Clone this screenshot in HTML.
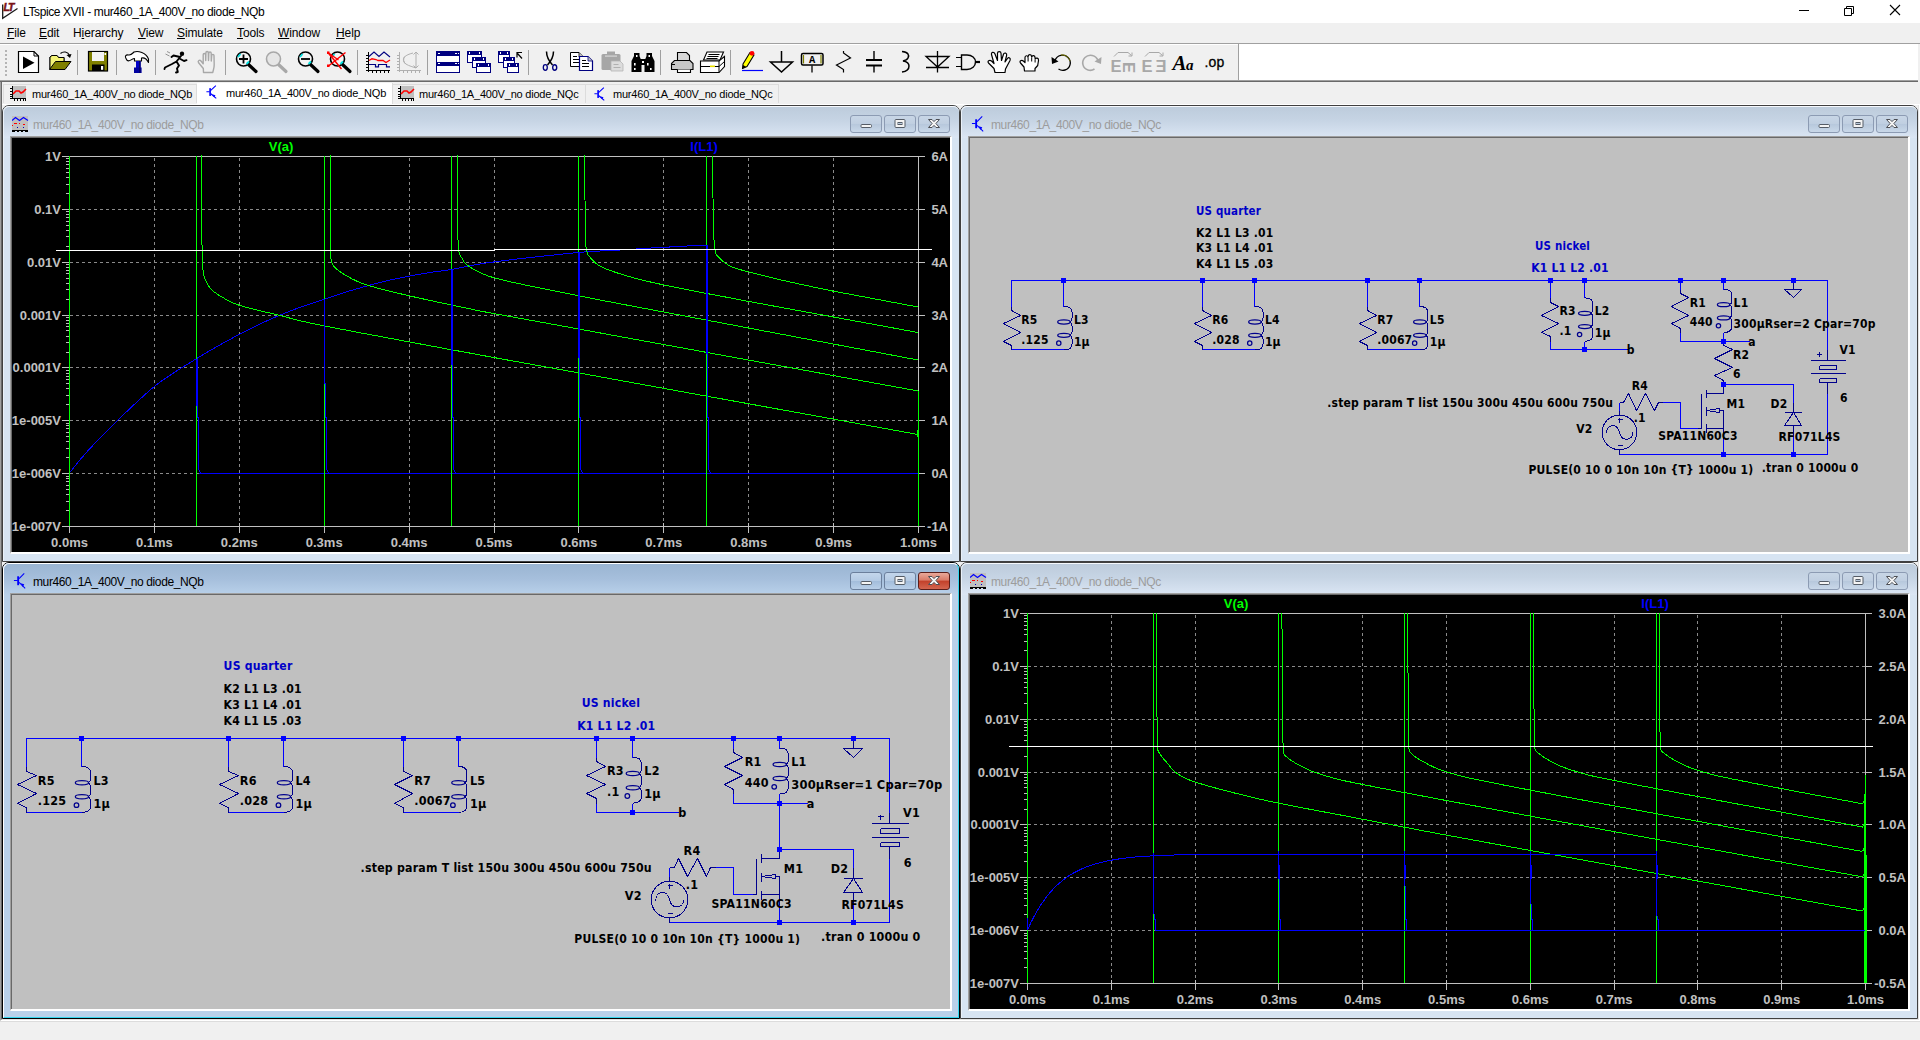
<!DOCTYPE html>
<html lang="en"><head><meta charset="utf-8"><title>LTspice XVII - mur460_1A_400V_no diode_NQb</title>
<style>
html,body{margin:0;padding:0;width:1920px;height:1040px;overflow:hidden;background:#f0f0f0;font-family:"Liberation Sans",sans-serif;}
*{box-sizing:border-box;}
.abs{position:absolute;}
#titlebar{position:absolute;left:0;top:0;width:1920px;height:23px;background:#fff;}
#titlebar .t{position:absolute;left:23px;top:4px;font-size:12px;line-height:16px;letter-spacing:-0.38px;color:#000;white-space:nowrap;}
#menubar{position:absolute;left:0;top:23px;width:1920px;height:20px;background:#f0f0f0;}
#menubar span{position:absolute;top:1.5px;font-size:12px;line-height:16px;letter-spacing:-0.1px;color:#000;white-space:nowrap;}
#menubar u{text-decoration:underline;text-underline-offset:1px;}
#toolbar{position:absolute;left:0;top:43px;width:1920px;height:39px;background:#f0f0f0;border-top:1px solid #a0a0a0;}
#toolbar .hl{position:absolute;left:0;top:0;width:1238px;height:1px;background:#fff;}
#toolbar .white{position:absolute;left:1238px;top:0;width:680px;height:36px;background:#fff;border-left:1px solid #a0a0a0;}
#toolbar .b1{position:absolute;left:0;top:36px;width:1918px;height:1px;background:#a0a0a0;}
#toolbar .b2{position:absolute;left:0;top:37px;width:1918px;height:1px;background:#696969;}
.sep{position:absolute;top:7px;width:1px;height:24px;background:#a0a0a0;}
#tabbar{position:absolute;left:0;top:82px;width:1920px;height:22px;background:#f0f0f0;}
.tab{position:absolute;top:2px;height:20px;font-size:11px;line-height:14px;letter-spacing:-0.21px;color:#000;white-space:nowrap;border-right:1px solid #dcdcdc;}
.tab.act{background:#fff;top:1px;height:21px;}
.tab span{position:absolute;top:4px;}
.tab svg{position:absolute;}
#mdi{position:absolute;left:0;top:104px;width:1920px;height:915px;background:#f0f0f0;}
#status{position:absolute;left:0;top:1019px;width:1920px;height:21px;background:#f0f0f0;border-top:2px solid #fff;}
.win{position:absolute;}
.win .cap{position:absolute;left:1px;top:1px;right:1px;height:32px;}
.win .ttl{position:absolute;top:10px;font-size:12px;line-height:16px;letter-spacing:-0.38px;white-space:nowrap;}
.cbtn{position:absolute;top:9px;width:32px;height:18px;border:1px solid #8391a8;border-radius:3px;}
</style></head>
<body>
<div id="titlebar">
<svg class="abs" style="left:2px;top:2px" width="20" height="18" viewBox="0 0 20 18"><path d="M0.7 2.5 L0.7 16.2 L15.5 6.5" fill="none" stroke="#1a1a1a" stroke-width="1.3"/><text x="1.5" y="9.3" style="font-family:'Liberation Sans',sans-serif;font-weight:bold;font-style:italic;font-size:10.5px;letter-spacing:-1.2px" fill="#7a1216" stroke="#7a1216" stroke-width="0.5">LT</text></svg>
<div class="t">LTspice XVII - mur460_1A_400V_no diode_NQb</div>
<svg class="abs" style="left:1780px;top:0" width="140" height="23" viewBox="0 0 140 23"><path d="M19 10.5 H29" stroke="#000" stroke-width="1" fill="none"/><path d="M64.5 8.5 h7 v7 h-7 Z M66.5 8.5 v-2 h7 v7 h-2" stroke="#000" stroke-width="1" fill="none"/><path d="M110 5 L120 15 M120 5 L110 15" stroke="#000" stroke-width="1.1" fill="none"/></svg>
</div>
<div id="menubar">
<span style="left:7px"><u>F</u>ile</span>
<span style="left:39px"><u>E</u>dit</span>
<span style="left:73px">H<u>i</u>erarchy</span>
<span style="left:138px"><u>V</u>iew</span>
<span style="left:177px"><u>S</u>imulate</span>
<span style="left:237px"><u>T</u>ools</span>
<span style="left:278px"><u>W</u>indow</span>
<span style="left:336px"><u>H</u>elp</span>
</div>
<div id="toolbar"><div class="hl"></div><div class="white"></div><div class="b1"></div><div class="b2"></div><svg class="abs" style="left:0;top:1px" width="1238" height="36" viewBox="0 45 1238 36"><rect x="5" y="50" width="2" height="2" fill="#b4b4b4"/>
<rect x="5" y="54" width="2" height="2" fill="#b4b4b4"/>
<rect x="5" y="58" width="2" height="2" fill="#b4b4b4"/>
<rect x="5" y="62" width="2" height="2" fill="#b4b4b4"/>
<rect x="5" y="66" width="2" height="2" fill="#b4b4b4"/>
<rect x="5" y="70" width="2" height="2" fill="#b4b4b4"/>
<rect x="5" y="74" width="2" height="2" fill="#b4b4b4"/>
<rect x="77" y="50" width="1" height="25" fill="#a0a0a0"/>
<rect x="116" y="50" width="1" height="25" fill="#a0a0a0"/>
<rect x="155" y="50" width="1" height="25" fill="#a0a0a0"/>
<rect x="225" y="50" width="1" height="25" fill="#a0a0a0"/>
<rect x="357" y="50" width="1" height="25" fill="#a0a0a0"/>
<rect x="427" y="50" width="1" height="25" fill="#a0a0a0"/>
<rect x="528" y="50" width="1" height="25" fill="#a0a0a0"/>
<rect x="660" y="50" width="1" height="25" fill="#a0a0a0"/>
<rect x="730" y="50" width="1" height="25" fill="#a0a0a0"/>
<path d="M18.5 51.5 H34 L38.5 56 V72.5 H18.5 Z" fill="#fff" stroke="#000" stroke-width="1.2"/><path d="M34 51.5 V56 H38.5" fill="none" stroke="#000" stroke-width="1"/><path d="M23 56.5 L23 69 L34.5 62.7 Z" fill="#000"/>
<path d="M50 69 V57 L52 55.5 H57 L58.5 57.5 H64 V61.5" fill="#f8f880" stroke="#000" stroke-width="1"/><path d="M50 69 V57 L52 55.5 H57 L58.5 57.5 H64 V61.5 H55.5 Z" fill="#f4f478"/><path d="M49.5 69.5 L55.5 61.5 H71 L65 69.5 Z" fill="#808000" stroke="#000" stroke-width="1"/><path d="M50 69 V57 L52 55.5 H57 L58.5 57.5 H64 V61.5" fill="none" stroke="#000" stroke-width="1"/><path d="M60.5 53.5 C63 51 68 51.5 69.5 55.5" fill="none" stroke="#000" stroke-width="1.1"/><path d="M66.5 55 L71.5 54 L70 58 Z" fill="#000"/>
<rect x="88.5" y="51.5" width="19" height="19.5" fill="#808000" stroke="#000" stroke-width="1.2"/><rect x="92" y="52" width="12" height="9" fill="#f4f4f4"/><rect x="104.5" y="53" width="1.6" height="2" fill="#fff"/><rect x="92" y="64.5" width="12.5" height="6.5" fill="#000"/><rect x="101" y="66" width="2.2" height="3.8" fill="#fff"/>
<path d="M126 58.5 C124.5 56 126 54.5 128.5 55 C131 55.5 132 54 134 52 C138 50.5 146 52.5 148.5 59 L148.5 62.5 C146.5 58.5 143.5 57.5 141.5 58 L141.5 61 L134.5 61 L134.5 58.5 C132.5 58.5 131 60.5 129 60.8 C127.5 61 126.5 60 126 58.5 Z" fill="#fff" stroke="#000" stroke-width="1.1" stroke-linejoin="round"/><rect x="136" y="61" width="4.6" height="7" fill="#0000c8"/><rect x="134" y="67.5" width="7.6" height="5.5" fill="#0000a0"/><rect x="139" y="61" width="1.6" height="12" fill="#000070"/>
<circle cx="182" cy="53.8" r="2.2" fill="#000"/><path d="M181 56 L176.5 61.5 L172 64 L165 67.5 L164.5 69 M176.5 61.5 L179 65.5 L177 68.5 L177.8 72 L176 72.5 M180 57 L173.5 55.5 L171.5 57 M179.5 58.5 L184 61 L186.5 60.2" fill="none" stroke="#000" stroke-width="1.9" stroke-linejoin="round" stroke-linecap="round"/><path d="M165.5 54 L169.5 56 M167 51.5 L170 53" stroke="#888" stroke-width="0.9" fill="none"/>
<path d="M203.5 72.5 L203.3 68.5 L198.6 62.8 C197.4 60.8 199.6 59.4 201 61 L203.2 63.8 L203.2 54.8 C203.2 53 205.6 53 205.6 54.8 L205.7 60.5 L205.9 52.8 C205.9 51 208.3 51 208.3 52.8 L208.5 60.5 L208.8 53.2 C208.8 51.5 211.2 51.5 211.2 53.2 L211.3 61 L211.7 55.5 C211.7 54 214 54 214 55.5 L214.2 64.5 C214.3 68 213.3 69.5 212.8 72.5 Z" fill="#f0f0f0" stroke="#a8a8a8" stroke-width="1.4" stroke-linejoin="round"/>
<line x1="248.5" y1="64.5" x2="256.0" y2="71.5" stroke="#000" stroke-width="3.2" stroke-linecap="round"/><circle cx="243.5" cy="59" r="7" fill="#f4f4f4" stroke="#000" stroke-width="1.6"/><path d="M238.0 57 L240.5 54" stroke="#00e0e0" stroke-width="1.8" fill="none"/><path d="M246.5 64 L249.0 61.5" stroke="#00e0e0" stroke-width="1.8" fill="none"/><path d="M239.0 59 H248.0 M243.5 54.5 V63.5" stroke="#000" stroke-width="1.8" fill="none"/>
<line x1="278.5" y1="64.5" x2="286.0" y2="71.5" stroke="#a8a8a8" stroke-width="3.2" stroke-linecap="round"/><circle cx="273.5" cy="59" r="7" fill="#e6e6e6" stroke="#a8a8a8" stroke-width="1.6"/>
<line x1="310.5" y1="64.5" x2="318.0" y2="71.5" stroke="#000" stroke-width="3.2" stroke-linecap="round"/><circle cx="305.5" cy="59" r="7" fill="#f4f4f4" stroke="#000" stroke-width="1.6"/><path d="M300.0 57 L302.5 54" stroke="#00e0e0" stroke-width="1.8" fill="none"/><path d="M308.5 64 L311.0 61.5" stroke="#00e0e0" stroke-width="1.8" fill="none"/><path d="M301.0 59 H310.0" stroke="#000" stroke-width="1.8" fill="none"/>
<line x1="342.5" y1="64.5" x2="350.0" y2="71.5" stroke="#000" stroke-width="3.2" stroke-linecap="round"/><circle cx="337.5" cy="59" r="7" fill="#f4f4f4" stroke="#000" stroke-width="1.6"/><path d="M332.0 57 L334.5 54" stroke="#00e0e0" stroke-width="1.8" fill="none"/><path d="M340.5 64 L343.0 61.5" stroke="#00e0e0" stroke-width="1.8" fill="none"/><path d="M327.5 52 L341.5 69 M345.5 52.5 L328.5 66 M328.5 53 L338.5 60" stroke="#ff0000" stroke-width="1.5" fill="none"/><rect x="327.0" y="51.5" width="2.5" height="2.5" fill="#ff0000"/><rect x="327.0" y="64.5" width="2.5" height="2.5" fill="#ff0000"/>
<g shape-rendering="crispEdges"><path d="M368.5 52 V72 M366 70.5 H390 M366 55.5h2 M366 58.5h2 M366 61.5h2 M366 64.5h2 M366 67.5h2 M372.5 71v2 M376.5 71v2 M380.5 71v2 M384.5 71v2 M388.5 71v2" stroke="#000" stroke-width="1" fill="none"/></g><polyline points="369,56.5 374,52 379,56.5 384,52 390,57" fill="none" stroke="#000080" stroke-width="1.1"/><polyline points="369,60.5 372,58.8 376,59.5 378,60.5 383,60.5 386,62.5 390,60" fill="none" stroke="#ff0000" stroke-width="1.3"/><polyline points="369,64.5 375.5,64.5 375.5,66.8 378.5,66.8 378.5,64.5 386.5,64.5 386.5,66.8 390,66.8" fill="none" stroke="#000080" stroke-width="1.2"/>
<g shape-rendering="crispEdges"><path d="M399.5 52 V72 M397 70.5 H421 M397 55.5h2 M397 58.5h2 M397 61.5h2 M397 64.5h2 M397 67.5h2 M403.5 71v2 M407.5 71v2 M411.5 71v2 M415.5 71v2 M419.5 71v2" stroke="#b0b0b0" stroke-width="1" fill="none"/></g><path d="M416 52 V68 M413.5 54.5 L416 52 L418.5 54.5 M413.5 65.5 L416 68 L418.5 65.5 M413 53 C405 55 402 58 404 62 C406 65 410 66 416 68 M404.5 56.5 C403 59 403.5 62 405.5 64" fill="none" stroke="#b0b0b0" stroke-width="1"/>
<g shape-rendering="crispEdges"><rect x="436.5" y="51.5" width="23" height="21" fill="#fff" stroke="#000080" stroke-width="1"/><rect x="436" y="51" width="24" height="4.5" fill="#000080"/><rect x="436" y="61.5" width="24" height="4" fill="#000080"/><rect x="438" y="52.5" width="2" height="1.5" fill="#fff"/><rect x="455" y="52.5" width="1.5" height="1.5" fill="#fff"/><rect x="457.5" y="52.5" width="1.5" height="1.5" fill="#fff"/><rect x="438" y="62.8" width="2" height="1.5" fill="#fff"/><rect x="455" y="62.8" width="1.5" height="1.5" fill="#fff"/><rect x="457.5" y="62.8" width="1.5" height="1.5" fill="#fff"/></g>
<g shape-rendering="crispEdges"><rect x="467.5" y="51.5" width="14" height="11" fill="#fff" stroke="#000080" stroke-width="1"/><rect x="467" y="51" width="15" height="4" fill="#000080"/><rect x="468.5" y="52.2" width="1.6" height="1.6" fill="#fff"/><rect x="478.7" y="52.2" width="1.6" height="1.6" fill="#fff"/><rect x="472.5" y="57.5" width="13" height="10" fill="#fff" stroke="#000080" stroke-width="1"/><rect x="472" y="57" width="14" height="4" fill="#000080"/><rect x="473.5" y="58.2" width="1.6" height="1.6" fill="#fff"/><rect x="482.7" y="58.2" width="1.6" height="1.6" fill="#fff"/><rect x="476.5" y="63.5" width="14" height="9" fill="#fff" stroke="#000080" stroke-width="1"/><rect x="476" y="63" width="15" height="4" fill="#000080"/><rect x="477.5" y="64.2" width="1.6" height="1.6" fill="#fff"/><rect x="487.7" y="64.2" width="1.6" height="1.6" fill="#fff"/></g>
<g shape-rendering="crispEdges"><rect x="498.5" y="51.5" width="11" height="11" fill="#fff" stroke="#000080" stroke-width="1"/><rect x="498" y="51" width="12" height="4" fill="#000080"/><rect x="499.5" y="52.2" width="1.6" height="1.6" fill="#fff"/><rect x="506.7" y="52.2" width="1.6" height="1.6" fill="#fff"/><rect x="503.5" y="57.5" width="11" height="10" fill="#fff" stroke="#000080" stroke-width="1"/><rect x="503" y="57" width="12" height="4" fill="#000080"/><rect x="504.5" y="58.2" width="1.6" height="1.6" fill="#fff"/><rect x="511.7" y="58.2" width="1.6" height="1.6" fill="#fff"/><rect x="507.5" y="63.5" width="11" height="9" fill="#fff" stroke="#000080" stroke-width="1"/><rect x="507" y="63" width="12" height="4" fill="#000080"/><rect x="508.5" y="64.2" width="1.6" height="1.6" fill="#fff"/><rect x="515.7" y="64.2" width="1.6" height="1.6" fill="#fff"/></g>
<path d="M517.5 53.5 L522 58.5 M517 57.5 V52.5 H522" stroke="#000" stroke-width="1.2" fill="none"/>
<path d="M546.5 51.5 C546.5 57 548 60 552.5 65 M553.5 51.5 C553.5 57 552 60 547.5 65" stroke="#000" stroke-width="1.5" fill="none"/><ellipse cx="545.3" cy="67.5" rx="2" ry="2.8" fill="none" stroke="#000080" stroke-width="1.3"/><ellipse cx="554.7" cy="67.5" rx="2" ry="2.8" fill="none" stroke="#000080" stroke-width="1.4"/>
<path d="M570.5 52.5 H579 L583.5 57 V66.5 H570.5 Z" fill="#fff" stroke="#000" stroke-width="1"/><path d="M579 52.5 V57 H583.5" fill="#c0c0c0" stroke="#000" stroke-width="0.8"/><path d="M573 56.5h4 M573 59.5h7 M573 62.5h7" stroke="#000" stroke-width="1.2"/><path d="M579.5 56.5 H588 L592.5 61 V70.5 H579.5 Z" fill="#fff" stroke="#000080" stroke-width="1.2"/><path d="M588 56.5 V61 H592.5" fill="#c0c0c0" stroke="#000080" stroke-width="0.8"/><path d="M582 60.5h4 M582 63.5h7 M582 66.5h7" stroke="#000" stroke-width="1.2"/>
<rect x="601.5" y="54" width="19" height="16" rx="1.5" fill="#a6a6a6"/><rect x="607" y="51.5" width="8" height="4" fill="#a6a6a6"/><rect x="605" y="55.5" width="12" height="1.2" fill="#d8d8d8"/><path d="M611 61 H620 L623 64 V71 H611 Z" fill="#dcdcdc" stroke="#b4b4b4" stroke-width="0.8"/><path d="M613.5 64.5h5 M613.5 67.5h7" stroke="#b0b0b0" stroke-width="1"/>
<path d="M634 53 h5.5 v3 l2 5 v11 h-10 v-11 l2.5 -5 Z M646.5 53 h5.5 v3 l2.5 5 v11 h-10 v-11 l2 -5 Z" fill="#000"/><rect x="640" y="59" width="6" height="6" fill="#000"/><rect x="636" y="55" width="1.5" height="2" fill="#fff"/><rect x="648.5" y="55" width="1.5" height="2" fill="#fff"/><rect x="634" y="63" width="1.6" height="2.5" fill="#fff"/><rect x="634" y="68" width="1.6" height="2" fill="#fff"/><rect x="647" y="63" width="1.6" height="2.5" fill="#fff"/><rect x="650" y="68" width="1.6" height="2" fill="#fff"/><rect x="642" y="61" width="2" height="2" fill="#fff"/>
<path d="M677.5 60 V52.5 H686.5 L689.5 55.5 V60" fill="#d8d8d8" stroke="#000" stroke-width="1.1"/><path d="M674.5 60.5 H690 L693 63.5 V69.5 H671.5 V63.5 Z" fill="#c8c8c8" stroke="#000" stroke-width="1.1"/><path d="M677.5 69.5 V72.5 H690.5 V69.5" fill="#fff" stroke="#000" stroke-width="1.1"/><path d="M672 64.5 h3" stroke="#000" stroke-width="1"/>
<path d="M707 52 H723.5 L720 60 H703.5 Z" fill="#fff" stroke="#000" stroke-width="1.1"/><path d="M708.5 54.5h11 M707.5 56.5h11 M706.5 58.5h11" stroke="#000" stroke-width="1"/><path d="M700.5 61 H719 L724.5 56.5 V66.5 L719 72.5 H700.5 Z" fill="#fff" stroke="#000" stroke-width="1.1"/><path d="M700.5 66.5 H719 L724.5 61.5 M719 61 V72.5" fill="none" stroke="#000" stroke-width="1"/><rect x="710" y="65.5" width="5" height="1.6" fill="#e8e000"/>
<path d="M742 70.5 H763" stroke="#0000ff" stroke-width="1.2"/><path d="M742.5 68.5 L743 64 L750 52.5 L754 55 L747 66.5 Z" fill="#ffff00" stroke="#000" stroke-width="1.1" stroke-linejoin="round"/><path d="M742.5 68.5 L743 65 L746 66.8 Z" fill="#000"/><circle cx="752" cy="53.3" r="2.4" fill="#ff0000"/>
<path d="M781.5 51 V62 M770.5 62 H792.5 L781.5 72 Z" fill="none" stroke="#000" stroke-width="1.5" stroke-linejoin="miter"/>
<rect x="801.5" y="53.5" width="21.5" height="11.5" rx="1.5" fill="#f0f0f0" stroke="#000" stroke-width="1.5"/><path d="M803.5 55 V63.5 M821 55 V63.5" stroke="#808000" stroke-width="1.2"/><path d="M812 65.5 V72.5" stroke="#000" stroke-width="1.3"/><text x="812.2" y="63.4" text-anchor="middle" style="font-family:'Liberation Mono',monospace;font-weight:bold;font-size:10.5px" fill="#000">A</text>
<polyline points="843.5,51 843.5,53 850.5,58 836.5,65 843.5,69.5 843.5,72.5" fill="none" stroke="#000" stroke-width="1.2"/>
<path d="M874 51 V59.5 M874 66 V72.5" stroke="#000" stroke-width="1.4"/><path d="M866 60 H882 M866 65.5 H882" stroke="#000" stroke-width="1.8"/>
<path d="M902 51.5 C908 52 909.5 55 908 58 C907 60 905.5 60.5 903 61 C906 61.5 909 62.5 909 66 C909 69.5 906 71.5 902 72" fill="none" stroke="#000" stroke-width="1.5"/>
<path d="M937.5 51 V72.5 M926 56.5 H949 L937.5 67 Z M926 67.5 H949" fill="none" stroke="#000" stroke-width="1.3"/>
<path d="M961.5 55 H967 C972 55 975.5 58 975.5 62 C975.5 66 972 69.5 967 69.5 H961.5 Z" fill="#f0f0f0" stroke="#000" stroke-width="1.4"/><path d="M956 57.5 H961 M956 66.5 H961" stroke="#000" stroke-width="1.2"/><path d="M975.5 62 H980" stroke="#000" stroke-width="2.2"/>
<path d="M995 72.5 L994 68.5 L988.5 63.0 C987 61.0 989.5 59.5 991.5 61.0 L994 63.5 L991.5 54.5 C991 52.0 994 51.5 995 54.0 L997.5 60.5 L997.5 53.3 C997.5 51.0 1001 51.0 1001 53.3 L1001.5 60.5 L1003.5 54.3 C1004.2 52.0 1007.3 53.0 1006.6 55.5 L1005 62.0 L1007.5 58.5 C1008.8 56.8 1011 58.3 1010 60.5 L1005.5 69.0 L1005 72.5 Z" fill="#fff" stroke="#000" stroke-width="1.2" stroke-linejoin="round"/>
<path d="M1024.5 71 L1024.0 67 L1020.5 63 C1019.0 61 1021.5 59.5 1023.3 61 L1025.0 62.5 L1025.0 57.5 C1025.0 55.2 1028.0 55.2 1028.0 57.2 L1028.2 56.2 C1028.5 54 1031.5 54 1031.5 56.4 L1031.8 57 C1032.1 55 1035.1 55.2 1035.0 57.6 L1035.2 59 C1036.0 57.3 1038.8 58 1038.5 60.5 L1037.7 65.5 L1035.0 68.5 L1035.0 71 Z" fill="#fff" stroke="#000" stroke-width="1.2" stroke-linejoin="round"/><path d="M1028.1 57.5 v4 M1031.7 57.5 v4 M1035.1 59.5 v3" stroke="#000" stroke-width="1" fill="none"/>
<path d="M1055 60.5 C1057 55 1064 53.5 1068 57.5 C1072 61.5 1070.5 68.5 1065 70 C1062.5 70.7 1060 70 1058.5 69" fill="none" stroke="#000" stroke-width="1.3"/><path d="M1061 55 C1065 54.5 1069 57 1070 61" fill="none" stroke="#808000" stroke-width="1"/><path d="M1051.5 57 L1052 64 L1058.5 61.5 Z" fill="#000"/>
<path d="M1098 60.5 C1096 55 1089 53.5 1085 57.5 C1081 61.5 1082.5 68.5 1088 70 C1090.5 70.7 1093 70 1094.5 69" fill="none" stroke="#a8a8a8" stroke-width="1.6"/><path d="M1101.5 57 L1101 64 L1094.5 61.5 Z" fill="#a8a8a8"/>
<text x="1110.5" y="72" style="font-family:'Liberation Sans',sans-serif;font-weight:bold;font-size:16.5px" fill="#a8a8a8">E</text>
<text transform="translate(1121.5,70.5) rotate(-90) scale(-1,1)" x="-8.5" y="13.5" style="font-family:'Liberation Sans',sans-serif;font-weight:bold;font-size:16.5px" fill="#a8a8a8">E</text>
<path d="M1114 56.5 L1118 52.5 H1128 L1131.5 55.5 M1128.5 56 H1132 V52.5" fill="none" stroke="#a8a8a8" stroke-width="1"/>
<text x="1141.5" y="72" style="font-family:'Liberation Sans',sans-serif;font-weight:bold;font-size:16.5px" fill="#a8a8a8">E</text>
<text transform="translate(1166.5,72) scale(-1,1)" x="0" y="0" style="font-family:'Liberation Sans',sans-serif;font-weight:bold;font-size:16.5px" fill="#a8a8a8">E</text>
<path d="M1145 56.5 L1149 52.5 H1159 L1162.5 55.5 M1159.5 56 H1163 V52.5" fill="none" stroke="#a8a8a8" stroke-width="1"/>
<text x="1172.5" y="70" style="font-family:'Liberation Serif',serif;font-weight:bold;font-style:italic;font-size:21px" fill="#000">A</text>
<text x="1186" y="70" style="font-family:'Liberation Serif',serif;font-weight:bold;font-style:italic;font-size:15px" fill="#000">a</text>
<text x="1204.5" y="66.8" style="font-family:'Liberation Sans',sans-serif;font-size:14px;letter-spacing:0.2px" fill="#000" stroke="#000" stroke-width="0.3">.op</text></svg></div>
<div id="tabbar">
<div class="abs" style="left:3px;top:3px;width:1px;height:18px;background:#dcdcdc"></div>
<div class="abs" style="left:3px;top:2px;width:776px;height:1px;background:#dcdcdc"></div>
<div class="tab" style="left:4px;width:193px;top:3px;height:18px"><svg style="left:6px;top:1px" width="17" height="16" viewBox="0 0 17 16" shape-rendering="crispEdges"><rect x="3" y="0" width="13" height="12" fill="#c0c0c0"/><path d="M2.5 0 V13 M0 12.5 H16 M0 2.5h2 M0 5.5h2 M0 8.5h2 M0 10.5h2 M4.5 13v2 M7.5 13v2 M10.5 13v2 M13.5 13v2 M15.5 13v2" stroke="#000" stroke-width="1" fill="none"/><polyline points="3,8 6,5 9,5 11,7 13,6 16,3" stroke="#ff0000" stroke-width="1.6" fill="none" shape-rendering="auto"/></svg><span style="left:28px;top:2px">mur460_1A_400V_no diode_NQb</span></div>
<div class="tab act" style="left:197px;width:196px;top:1px;height:21px"><svg style="left:9px;top:2px" width="11.5" height="14.5" viewBox="0 0 14 17"><path d="M0.5 8 H4.5 M12 0.5 L5.5 6.5 M5.5 10 L12.5 16" stroke="#0000ff" stroke-width="1.3" fill="none"/><rect x="4" y="3.5" width="2" height="9.5" fill="#0000ff"/><path d="M7.5 11 L11.5 12 L10 15 Z" fill="#0000ff"/></svg><span style="left:29px;top:3px">mur460_1A_400V_no diode_NQb</span></div>
<div class="tab" style="left:393px;width:193px;top:3px;height:18px"><svg style="left:5px;top:1px" width="17" height="16" viewBox="0 0 17 16" shape-rendering="crispEdges"><rect x="3" y="0" width="13" height="12" fill="#c0c0c0"/><path d="M2.5 0 V13 M0 12.5 H16 M0 2.5h2 M0 5.5h2 M0 8.5h2 M0 10.5h2 M4.5 13v2 M7.5 13v2 M10.5 13v2 M13.5 13v2 M15.5 13v2" stroke="#000" stroke-width="1" fill="none"/><polyline points="3,8 6,5 9,5 11,7 13,6 16,3" stroke="#ff0000" stroke-width="1.6" fill="none" shape-rendering="auto"/></svg><span style="left:26px;top:2px">mur460_1A_400V_no diode_NQc</span></div>
<div class="tab" style="left:586px;width:193px;top:3px;height:18px"><svg style="left:8px;top:2px" width="11.5" height="14.5" viewBox="0 0 14 17"><path d="M0.5 8 H4.5 M12 0.5 L5.5 6.5 M5.5 10 L12.5 16" stroke="#0000ff" stroke-width="1.3" fill="none"/><rect x="4" y="3.5" width="2" height="9.5" fill="#0000ff"/><path d="M7.5 11 L11.5 12 L10 15 Z" fill="#0000ff"/></svg><span style="left:27px;top:2px">mur460_1A_400V_no diode_NQc</span></div>
</div>
<div class="abs" style="left:0;top:104px;width:1920px;height:917px;border-left:1px solid #a0a0a0;border-top:1px solid #fff;border-right:1px solid #fff;border-bottom:1px solid #fff;background:#f0f0f0"></div>
<div class="abs" style="left:1px;top:105px;width:1918px;height:915px;border-left:1px solid #696969;border-right:1px solid #e3e3e3;border-bottom:1px solid #e3e3e3;"></div>
<div class="abs" style="left:0;top:82px;width:1px;height:23px;background:#a0a0a0"></div><div class="abs" style="left:1px;top:82px;width:1px;height:23px;background:#696969"></div>
<div class="win" style="left:2px;top:105px;width:958px;height:457px;background:#d7e4f2;border:1px solid #404040;border-radius:7px 7px 0 0;">
<div class="abs" style="left:0;top:0;right:0;height:32px;background:linear-gradient(#bccbdb 0%,#c6d4e4 45%,#dbe6f4 100%);border-radius:6px 6px 0 0;"></div>
<div class="abs" style="left:0;top:0;right:0;bottom:0;border-top:1px solid #f6f9fd;border-left:1px solid #eaf1f9;border-radius:6px 6px 0 0;"></div>
<div class="abs" style="left:9px;top:10px;width:18px;height:18px"><svg width="17" height="17" viewBox="0 0 17 17" shape-rendering="crispEdges"><rect x="0" y="0" width="16" height="14" fill="#c0c0c0"/><polyline points="0,4.5 3.5,1.5 7.5,4.5 11.5,1.5 16,4.5" stroke="#0000ff" stroke-width="1.2" fill="none" shape-rendering="auto"/><path d="M2 7.5h3 M7 7.5h1 M11 8.5h2 M0 9.5h1" stroke="#ff0000" stroke-width="1" fill="none"/><path d="M5 11.5h1 M11 11.5h1" stroke="#0000c0" stroke-width="1" fill="none"/><path d="M0 14.5 H16 M0 15.5h3 M5 15.5h2 M9 15.5h2 M13 15.5h3" stroke="#000" stroke-width="1" fill="none"/></svg></div>
<div class="ttl" style="left:30px;top:11px;color:#9c9c9c">mur460_1A_400V_no diode_NQb</div>
<div class="cbtn" style="left:847px;background:linear-gradient(#c8d6e6 0%,#c0cfe1 48%,#b7c8dc 52%,#c9d8e9 100%);border-color:#8c9bb3">
<svg class="abs" style="left:0;top:0" width="30" height="16"><rect x="10" y="8.5" width="10.5" height="3" rx="1" fill="#f4f4f4" stroke="#555c66" stroke-width="1"/></svg>
</div>
<div class="cbtn" style="left:881px;background:linear-gradient(#c8d6e6 0%,#c0cfe1 48%,#b7c8dc 52%,#c9d8e9 100%);border-color:#8c9bb3">
<svg class="abs" style="left:0;top:0" width="30" height="16"><rect x="10" y="3.5" width="10" height="8" rx="1" fill="#f4f4f4" stroke="#555c66" stroke-width="1"/><rect x="13" y="6.5" width="4" height="2" fill="#b7c8dc" stroke="#555c66" stroke-width="1"/></svg>
</div>
<div class="cbtn" style="left:915px;background:linear-gradient(#c8d6e6 0%,#c0cfe1 48%,#b7c8dc 52%,#c9d8e9 100%);border-color:#8c9bb3">
<svg class="abs" style="left:0;top:0" width="30" height="16"><path d="M9.5 3.5 L13 3.5 L15 5.6 L17 3.5 L20.5 3.5 L16.9 7.5 L20.5 11.5 L17 11.5 L15 9.4 L13 11.5 L9.5 11.5 L13.1 7.5 Z" fill="#f4f4f4" stroke="#4c4f55" stroke-width="1" stroke-linejoin="round"/></svg>
</div>
<div class="abs" style="left:7px;top:30px;width:942px;height:418px;border-left:1px solid #a0a0a0;border-top:1px solid #a0a0a0;border-right:2px solid #fff;border-bottom:2px solid #fff;"></div>
<div class="abs" style="left:8px;top:31px;width:939px;height:415px;border-left:1px solid #696969;border-top:1px solid #696969;"></div>
<div class="abs" style="left:9px;top:32px;width:938px;height:414px;overflow:hidden;background:#000"><svg class="abs" style="left:0;top:0" width="938" height="414" viewBox="12 138 938 414" shape-rendering="crispEdges"><line x1="154.5" y1="158" x2="154.5" y2="526" stroke="#8a8a8a" stroke-width="1" stroke-dasharray="3 3"/>
<line x1="239.5" y1="158" x2="239.5" y2="526" stroke="#8a8a8a" stroke-width="1" stroke-dasharray="3 3"/>
<line x1="324.5" y1="158" x2="324.5" y2="526" stroke="#8a8a8a" stroke-width="1" stroke-dasharray="3 3"/>
<line x1="409.5" y1="158" x2="409.5" y2="526" stroke="#8a8a8a" stroke-width="1" stroke-dasharray="3 3"/>
<line x1="494.5" y1="158" x2="494.5" y2="526" stroke="#8a8a8a" stroke-width="1" stroke-dasharray="3 3"/>
<line x1="578.5" y1="158" x2="578.5" y2="526" stroke="#8a8a8a" stroke-width="1" stroke-dasharray="3 3"/>
<line x1="663.5" y1="158" x2="663.5" y2="526" stroke="#8a8a8a" stroke-width="1" stroke-dasharray="3 3"/>
<line x1="748.5" y1="158" x2="748.5" y2="526" stroke="#8a8a8a" stroke-width="1" stroke-dasharray="3 3"/>
<line x1="833.5" y1="158" x2="833.5" y2="526" stroke="#8a8a8a" stroke-width="1" stroke-dasharray="3 3"/>
<line x1="70" y1="209.5" x2="918" y2="209.5" stroke="#8a8a8a" stroke-width="1" stroke-dasharray="3 3"/>
<line x1="70" y1="262.5" x2="918" y2="262.5" stroke="#8a8a8a" stroke-width="1" stroke-dasharray="3 3"/>
<line x1="70" y1="315.5" x2="918" y2="315.5" stroke="#8a8a8a" stroke-width="1" stroke-dasharray="3 3"/>
<line x1="70" y1="367.5" x2="918" y2="367.5" stroke="#8a8a8a" stroke-width="1" stroke-dasharray="3 3"/>
<line x1="70" y1="420.5" x2="918" y2="420.5" stroke="#8a8a8a" stroke-width="1" stroke-dasharray="3 3"/>
<line x1="70" y1="473.5" x2="918" y2="473.5" stroke="#8a8a8a" stroke-width="1" stroke-dasharray="3 3"/>
<line x1="62" y1="156.5" x2="925" y2="156.5" stroke="#c0c0c0" stroke-width="1" />
<line x1="62" y1="526.5" x2="925" y2="526.5" stroke="#c0c0c0" stroke-width="1" />
<line x1="69.5" y1="156" x2="69.5" y2="533" stroke="#c0c0c0" stroke-width="1" />
<line x1="918.5" y1="156" x2="918.5" y2="533" stroke="#c0c0c0" stroke-width="1" />
<line x1="154.5" y1="523" x2="154.5" y2="533" stroke="#c0c0c0" stroke-width="1" />
<line x1="239.5" y1="523" x2="239.5" y2="533" stroke="#c0c0c0" stroke-width="1" />
<line x1="324.5" y1="523" x2="324.5" y2="533" stroke="#c0c0c0" stroke-width="1" />
<line x1="409.5" y1="523" x2="409.5" y2="533" stroke="#c0c0c0" stroke-width="1" />
<line x1="494.5" y1="523" x2="494.5" y2="533" stroke="#c0c0c0" stroke-width="1" />
<line x1="578.5" y1="523" x2="578.5" y2="533" stroke="#c0c0c0" stroke-width="1" />
<line x1="663.5" y1="523" x2="663.5" y2="533" stroke="#c0c0c0" stroke-width="1" />
<line x1="748.5" y1="523" x2="748.5" y2="533" stroke="#c0c0c0" stroke-width="1" />
<line x1="833.5" y1="523" x2="833.5" y2="533" stroke="#c0c0c0" stroke-width="1" />
<line x1="62" y1="156.5" x2="69" y2="156.5" stroke="#c0c0c0" stroke-width="1" />
<line x1="918" y1="156.5" x2="925" y2="156.5" stroke="#c0c0c0" stroke-width="1" />
<line x1="66" y1="193.5" x2="69" y2="193.5" stroke="#c0c0c0" stroke-width="1" />
<line x1="66" y1="184.5" x2="69" y2="184.5" stroke="#c0c0c0" stroke-width="1" />
<line x1="66" y1="177.5" x2="69" y2="177.5" stroke="#c0c0c0" stroke-width="1" />
<line x1="66" y1="172.5" x2="69" y2="172.5" stroke="#c0c0c0" stroke-width="1" />
<line x1="66" y1="168.5" x2="69" y2="168.5" stroke="#c0c0c0" stroke-width="1" />
<line x1="66" y1="164.5" x2="69" y2="164.5" stroke="#c0c0c0" stroke-width="1" />
<line x1="66" y1="161.5" x2="69" y2="161.5" stroke="#c0c0c0" stroke-width="1" />
<line x1="66" y1="158.5" x2="69" y2="158.5" stroke="#c0c0c0" stroke-width="1" />
<line x1="62" y1="209.5" x2="69" y2="209.5" stroke="#c0c0c0" stroke-width="1" />
<line x1="918" y1="209.5" x2="925" y2="209.5" stroke="#c0c0c0" stroke-width="1" />
<line x1="66" y1="246.5" x2="69" y2="246.5" stroke="#c0c0c0" stroke-width="1" />
<line x1="66" y1="236.5" x2="69" y2="236.5" stroke="#c0c0c0" stroke-width="1" />
<line x1="66" y1="230.5" x2="69" y2="230.5" stroke="#c0c0c0" stroke-width="1" />
<line x1="66" y1="225.5" x2="69" y2="225.5" stroke="#c0c0c0" stroke-width="1" />
<line x1="66" y1="221.5" x2="69" y2="221.5" stroke="#c0c0c0" stroke-width="1" />
<line x1="66" y1="217.5" x2="69" y2="217.5" stroke="#c0c0c0" stroke-width="1" />
<line x1="66" y1="214.5" x2="69" y2="214.5" stroke="#c0c0c0" stroke-width="1" />
<line x1="66" y1="211.5" x2="69" y2="211.5" stroke="#c0c0c0" stroke-width="1" />
<line x1="62" y1="262.5" x2="69" y2="262.5" stroke="#c0c0c0" stroke-width="1" />
<line x1="918" y1="262.5" x2="925" y2="262.5" stroke="#c0c0c0" stroke-width="1" />
<line x1="66" y1="299.5" x2="69" y2="299.5" stroke="#c0c0c0" stroke-width="1" />
<line x1="66" y1="289.5" x2="69" y2="289.5" stroke="#c0c0c0" stroke-width="1" />
<line x1="66" y1="283.5" x2="69" y2="283.5" stroke="#c0c0c0" stroke-width="1" />
<line x1="66" y1="278.5" x2="69" y2="278.5" stroke="#c0c0c0" stroke-width="1" />
<line x1="66" y1="273.5" x2="69" y2="273.5" stroke="#c0c0c0" stroke-width="1" />
<line x1="66" y1="270.5" x2="69" y2="270.5" stroke="#c0c0c0" stroke-width="1" />
<line x1="66" y1="267.5" x2="69" y2="267.5" stroke="#c0c0c0" stroke-width="1" />
<line x1="66" y1="264.5" x2="69" y2="264.5" stroke="#c0c0c0" stroke-width="1" />
<line x1="62" y1="315.5" x2="69" y2="315.5" stroke="#c0c0c0" stroke-width="1" />
<line x1="918" y1="315.5" x2="925" y2="315.5" stroke="#c0c0c0" stroke-width="1" />
<line x1="66" y1="352.5" x2="69" y2="352.5" stroke="#c0c0c0" stroke-width="1" />
<line x1="66" y1="342.5" x2="69" y2="342.5" stroke="#c0c0c0" stroke-width="1" />
<line x1="66" y1="336.5" x2="69" y2="336.5" stroke="#c0c0c0" stroke-width="1" />
<line x1="66" y1="330.5" x2="69" y2="330.5" stroke="#c0c0c0" stroke-width="1" />
<line x1="66" y1="326.5" x2="69" y2="326.5" stroke="#c0c0c0" stroke-width="1" />
<line x1="66" y1="323.5" x2="69" y2="323.5" stroke="#c0c0c0" stroke-width="1" />
<line x1="66" y1="320.5" x2="69" y2="320.5" stroke="#c0c0c0" stroke-width="1" />
<line x1="66" y1="317.5" x2="69" y2="317.5" stroke="#c0c0c0" stroke-width="1" />
<line x1="62" y1="367.5" x2="69" y2="367.5" stroke="#c0c0c0" stroke-width="1" />
<line x1="918" y1="367.5" x2="925" y2="367.5" stroke="#c0c0c0" stroke-width="1" />
<line x1="66" y1="404.5" x2="69" y2="404.5" stroke="#c0c0c0" stroke-width="1" />
<line x1="66" y1="395.5" x2="69" y2="395.5" stroke="#c0c0c0" stroke-width="1" />
<line x1="66" y1="388.5" x2="69" y2="388.5" stroke="#c0c0c0" stroke-width="1" />
<line x1="66" y1="383.5" x2="69" y2="383.5" stroke="#c0c0c0" stroke-width="1" />
<line x1="66" y1="379.5" x2="69" y2="379.5" stroke="#c0c0c0" stroke-width="1" />
<line x1="66" y1="376.5" x2="69" y2="376.5" stroke="#c0c0c0" stroke-width="1" />
<line x1="66" y1="373.5" x2="69" y2="373.5" stroke="#c0c0c0" stroke-width="1" />
<line x1="66" y1="370.5" x2="69" y2="370.5" stroke="#c0c0c0" stroke-width="1" />
<line x1="62" y1="420.5" x2="69" y2="420.5" stroke="#c0c0c0" stroke-width="1" />
<line x1="918" y1="420.5" x2="925" y2="420.5" stroke="#c0c0c0" stroke-width="1" />
<line x1="66" y1="457.5" x2="69" y2="457.5" stroke="#c0c0c0" stroke-width="1" />
<line x1="66" y1="448.5" x2="69" y2="448.5" stroke="#c0c0c0" stroke-width="1" />
<line x1="66" y1="441.5" x2="69" y2="441.5" stroke="#c0c0c0" stroke-width="1" />
<line x1="66" y1="436.5" x2="69" y2="436.5" stroke="#c0c0c0" stroke-width="1" />
<line x1="66" y1="432.5" x2="69" y2="432.5" stroke="#c0c0c0" stroke-width="1" />
<line x1="66" y1="428.5" x2="69" y2="428.5" stroke="#c0c0c0" stroke-width="1" />
<line x1="66" y1="425.5" x2="69" y2="425.5" stroke="#c0c0c0" stroke-width="1" />
<line x1="66" y1="423.5" x2="69" y2="423.5" stroke="#c0c0c0" stroke-width="1" />
<line x1="62" y1="473.5" x2="69" y2="473.5" stroke="#c0c0c0" stroke-width="1" />
<line x1="918" y1="473.5" x2="925" y2="473.5" stroke="#c0c0c0" stroke-width="1" />
<line x1="66" y1="510.5" x2="69" y2="510.5" stroke="#c0c0c0" stroke-width="1" />
<line x1="66" y1="501.5" x2="69" y2="501.5" stroke="#c0c0c0" stroke-width="1" />
<line x1="66" y1="494.5" x2="69" y2="494.5" stroke="#c0c0c0" stroke-width="1" />
<line x1="66" y1="489.5" x2="69" y2="489.5" stroke="#c0c0c0" stroke-width="1" />
<line x1="66" y1="485.5" x2="69" y2="485.5" stroke="#c0c0c0" stroke-width="1" />
<line x1="66" y1="481.5" x2="69" y2="481.5" stroke="#c0c0c0" stroke-width="1" />
<line x1="66" y1="478.5" x2="69" y2="478.5" stroke="#c0c0c0" stroke-width="1" />
<line x1="66" y1="476.5" x2="69" y2="476.5" stroke="#c0c0c0" stroke-width="1" />
<line x1="62" y1="526.5" x2="69" y2="526.5" stroke="#c0c0c0" stroke-width="1" />
<line x1="918" y1="526.5" x2="925" y2="526.5" stroke="#c0c0c0" stroke-width="1" />
<polyline points="69.5,473.0 70.8,471.3 72.6,469.0 74.8,466.3 77.2,463.3 79.6,460.3 82.0,457.5 84.3,454.9 86.6,452.2 89.0,449.6 91.5,446.9 94.1,444.0 97.0,441.0 100.2,437.7 103.6,434.2 107.2,430.6 110.9,426.9 114.5,423.4 118.0,420.0 121.3,416.8 124.5,413.7 127.7,410.7 130.8,407.7 133.9,404.8 137.0,402.0 140.0,399.2 143.0,396.4 145.9,393.8 148.9,391.1 151.9,388.5 155.0,386.0 158.2,383.5 161.5,381.1 164.8,378.8 168.2,376.5 171.6,374.3 175.0,372.0 178.4,369.8 181.9,367.6 185.4,365.4 188.9,363.3 192.4,361.2 196.0,359.0 199.6,356.8 203.3,354.6 206.9,352.4 210.6,350.3 214.3,348.1 218.0,346.0 221.7,343.9 225.4,341.8 229.2,339.8 232.9,337.8 236.5,335.8 240.0,334.0 243.3,332.3 246.6,330.6 249.7,329.0 252.8,327.5 255.9,326.0 259.0,324.5 262.1,323.0 265.2,321.6 268.2,320.2 271.4,318.8 274.6,317.4 278.0,316.0 281.6,314.5 285.3,313.0 289.2,311.5 293.1,309.9 297.1,308.4 301.0,307.0 305.0,305.6 309.0,304.2 313.1,302.9 317.2,301.6 321.2,300.3 325.0,299.0 328.7,297.8 332.2,296.6 335.7,295.4 339.1,294.2 342.5,293.1 346.0,292.0 349.5,290.9 353.0,289.9 356.5,288.9 360.0,287.9 363.5,287.0 367.0,286.0 370.5,285.0 374.0,284.1 377.4,283.2 380.9,282.2 384.4,281.4 388.0,280.5 391.6,279.7 395.3,278.9 399.1,278.1 402.8,277.4 406.4,276.7 410.0,276.0 413.4,275.4 416.8,274.7 420.1,274.2 423.3,273.6 426.6,273.0 430.0,272.5 433.3,272.0 436.6,271.6 439.9,271.1 443.4,270.7 447.0,270.1 451.0,269.5 455.4,268.7 460.2,267.8 465.2,266.8 470.3,265.8 475.3,264.8 480.0,264.0 484.4,263.3 488.6,262.7 492.8,262.1 496.8,261.6 500.9,261.0 505.0,260.5 509.2,260.0 513.4,259.4 517.6,258.9 521.7,258.4 525.9,258.0 530.0,257.5 534.1,257.1 538.1,256.6 542.1,256.2 546.0,255.8 550.0,255.4 554.0,255.0 558.0,254.6 562.1,254.1 566.1,253.7 570.1,253.3 574.1,252.9 578.0,252.5 581.8,252.2 585.6,251.9 589.2,251.7 592.9,251.4 596.5,251.2 600.0,251.0 603.2,250.8 606.1,250.7 608.9,250.6 611.9,250.4 615.5,250.2 620.0,250.0 625.4,249.7 631.6,249.3 638.4,248.8 645.5,248.4 652.8,247.9 660.0,247.5 667.9,247.1 676.6,246.6 685.5,246.1 693.9,245.6 700.9,245.3 706.0,245.0" fill="none" stroke="#0000ff" stroke-width="1" stroke-linejoin="bevel" />
<line x1="69.5" y1="462" x2="69.5" y2="473.14285714285717" stroke="#0000ff" stroke-width="1" />
<polyline points="198.5,463.1 199.0,470.1 201.0,473.6" fill="none" stroke="#0000ff" stroke-width="1" stroke-linejoin="bevel" />
<polyline points="326.5,463.1 327.0,470.1 329.0,473.6" fill="none" stroke="#0000ff" stroke-width="1" stroke-linejoin="bevel" />
<polyline points="453.5,463.1 454.0,470.1 456.0,473.6" fill="none" stroke="#0000ff" stroke-width="1" stroke-linejoin="bevel" />
<polyline points="580.5,463.1 581.0,470.1 583.0,473.6" fill="none" stroke="#0000ff" stroke-width="1" stroke-linejoin="bevel" />
<polyline points="708.5,463.1 709.0,470.1 711.0,473.6" fill="none" stroke="#0000ff" stroke-width="1" stroke-linejoin="bevel" />
<line x1="199.35" y1="473.64285714285717" x2="918" y2="473.64285714285717" stroke="#0000ff" stroke-width="1" />
<line x1="69.5" y1="156" x2="69.5" y2="526" stroke="#00ff00" stroke-width="1" />
<line x1="196.5" y1="156" x2="196.5" y2="526" stroke="#00ff00" stroke-width="1" />
<polyline points="201.5,155.0 202.0,245.0 202.0,245.0 202.1,247.0 202.1,249.8 202.2,253.2 202.3,256.9 202.5,260.6 202.6,264.2 202.8,267.4 203.0,270.0 203.2,272.0 203.4,273.6 203.7,274.9 204.0,276.0 204.3,277.0 204.6,277.9 205.0,278.9 205.5,280.0 206.0,281.2 206.5,282.3 207.1,283.5 207.7,284.6 208.4,285.7 209.2,286.8 210.0,287.9 211.0,289.0 212.1,290.0 213.2,291.1 214.4,292.1 215.7,293.0 217.1,294.0 218.6,295.0 220.3,296.0 222.0,297.0 223.8,298.0 225.5,299.1 227.4,300.1 229.3,301.2 231.5,302.2 233.9,303.3 236.7,304.4 240.0,305.5 243.7,306.6 247.9,307.8 252.4,308.9 257.2,310.1 262.2,311.3 267.4,312.5 272.7,313.7 278.0,315.0 282.7,316.2 286.6,317.2 290.2,318.2 294.2,319.3 299.1,320.5 305.4,321.9 313.9,323.8 325.0,326.0 340.3,329.0 359.8,332.7 382.0,336.8 405.4,341.2 428.5,345.5 449.6,349.4 467.3,352.6 480.0,355.0 918.0,434.5" fill="none" stroke="#00ff00" stroke-width="1" stroke-linejoin="bevel" />
<line x1="324.5" y1="156" x2="324.5" y2="526" stroke="#00ff00" stroke-width="1" />
<polyline points="330.0,155.0 330.5,245.0 330.5,245.0 330.5,246.1 330.5,247.6 330.5,249.5 330.5,251.5 330.5,253.5 330.6,255.6 330.8,257.4 331.0,259.0 331.3,260.3 331.6,261.5 331.9,262.6 332.3,263.6 332.8,264.6 333.4,265.5 334.1,266.5 335.0,267.5 336.1,268.6 337.2,269.6 338.6,270.7 340.0,271.7 341.6,272.8 343.2,273.8 345.1,274.9 347.0,276.0 349.0,277.1 350.9,278.2 352.9,279.3 355.1,280.3 357.5,281.5 360.2,282.6 363.3,283.8 367.0,285.0 371.1,286.3 375.5,287.5 380.3,288.8 385.4,290.1 390.9,291.5 396.8,292.9 403.2,294.4 410.0,296.0 417.9,297.8 427.2,299.8 437.3,302.0 447.7,304.2 457.7,306.3 466.8,308.2 474.4,309.8 480.0,311.0 918.0,391.0" fill="none" stroke="#00ff00" stroke-width="1" stroke-linejoin="bevel" />
<line x1="451.5" y1="156" x2="451.5" y2="526" stroke="#00ff00" stroke-width="1" />
<polyline points="457.5,155.0 458.0,240.0 458.0,240.0 458.1,241.0 458.1,242.3 458.2,243.8 458.3,245.6 458.4,247.3 458.6,249.1 458.7,250.7 459.0,252.0 459.3,253.1 459.7,254.1 460.1,255.0 460.5,255.9 461.0,256.7 461.5,257.4 462.0,258.2 462.5,259.0 463.0,259.8 463.4,260.5 463.7,261.3 464.2,262.0 464.6,262.7 465.3,263.4 466.0,264.2 467.0,265.0 468.2,265.9 469.6,266.8 471.2,267.8 472.8,268.8 474.6,269.8 476.4,270.7 478.2,271.6 480.0,272.5 481.6,273.3 483.1,274.0 484.6,274.6 486.1,275.2 487.8,275.8 489.8,276.5 492.2,277.2 495.0,278.0 498.2,278.8 501.5,279.7 505.1,280.6 509.1,281.5 513.4,282.5 518.3,283.5 523.8,284.7 530.0,286.0 537.6,287.6 546.7,289.4 556.8,291.4 567.2,293.5 577.3,295.5 586.6,297.3 594.4,298.9 600.0,300.0 918.0,360.0" fill="none" stroke="#00ff00" stroke-width="1" stroke-linejoin="bevel" />
<line x1="578.5" y1="156" x2="578.5" y2="526" stroke="#00ff00" stroke-width="1" />
<polyline points="584.5,155.0 585.5,243.0 585.5,243.0 585.6,243.5 585.6,244.3 585.7,245.2 585.8,246.1 586.0,247.1 586.1,248.2 586.3,249.1 586.5,250.0 586.7,250.8 586.8,251.5 587.0,252.1 587.1,252.8 587.4,253.5 587.7,254.2 588.3,255.1 589.0,256.0 589.9,257.1 590.8,258.2 591.9,259.5 593.2,260.8 594.5,262.1 596.1,263.5 597.9,264.8 600.0,266.0 602.3,267.2 604.7,268.3 607.3,269.4 610.2,270.5 613.3,271.6 616.6,272.7 620.1,273.8 624.0,275.0 627.9,276.2 631.8,277.3 635.9,278.4 640.2,279.5 645.0,280.7 650.5,282.0 656.7,283.4 664.0,285.0 673.1,286.9 684.1,289.1 696.3,291.4 709.0,293.9 721.4,296.2 732.7,298.4 742.1,300.2 749.0,301.5 918.0,332.5" fill="none" stroke="#00ff00" stroke-width="1" stroke-linejoin="bevel" />
<line x1="706.5" y1="156" x2="706.5" y2="526" stroke="#00ff00" stroke-width="1" />
<polyline points="712.0,155.0 714.0,240.0 714.0,240.0 714.1,240.7 714.1,241.7 714.2,242.8 714.3,244.1 714.5,245.4 714.6,246.7 714.8,247.9 715.0,249.0 715.2,250.0 715.3,250.8 715.4,251.6 715.5,252.4 715.8,253.2 716.1,254.1 716.7,255.0 717.5,256.0 718.5,257.1 719.8,258.4 721.2,259.7 722.7,261.1 724.4,262.4 726.2,263.7 728.1,264.9 730.0,266.0 731.9,266.9 733.8,267.7 735.7,268.4 737.7,269.0 740.0,269.6 742.6,270.3 745.5,271.1 749.0,272.0 753.1,273.1 757.7,274.2 762.7,275.5 768.0,276.8 773.5,278.1 779.1,279.5 784.7,280.8 790.0,282.0 795.5,283.2 801.5,284.5 807.7,285.8 813.8,287.1 819.6,288.3 824.8,289.4 829.2,290.3 832.5,291.0 918.0,307.0" fill="none" stroke="#00ff00" stroke-width="1" stroke-linejoin="bevel" />
<line x1="918.5" y1="391" x2="918.5" y2="526" stroke="#00ff00" stroke-width="1" />
<line x1="917.5" y1="430" x2="917.5" y2="437" stroke="#00ff00" stroke-width="1" />
<line x1="197.0" y1="358.70454545454544" x2="197.0" y2="406" stroke="#0000ff" stroke-width="2" />
<line x1="197.5" y1="405" x2="197.5" y2="418.14285714285717" stroke="#0000ff" stroke-width="1" />
<line x1="198.5" y1="417.14285714285717" x2="198.5" y2="467.14285714285717" stroke="#0000ff" stroke-width="1" />
<line x1="324.5" y1="299.1666666666667" x2="324.5" y2="384" stroke="#0000ff" stroke-width="1" />
<line x1="325.5" y1="383" x2="325.5" y2="418.14285714285717" stroke="#0000ff" stroke-width="1" />
<line x1="326.5" y1="417.14285714285717" x2="326.5" y2="467.14285714285717" stroke="#0000ff" stroke-width="1" />
<line x1="452.0" y1="269.4051724137931" x2="452.0" y2="365" stroke="#0000ff" stroke-width="2" />
<line x1="452.5" y1="364" x2="452.5" y2="418.14285714285717" stroke="#0000ff" stroke-width="1" />
<line x1="453.5" y1="417.14285714285717" x2="453.5" y2="467.14285714285717" stroke="#0000ff" stroke-width="1" />
<line x1="579.0" y1="252.4659090909091" x2="579.0" y2="358" stroke="#0000ff" stroke-width="2" />
<line x1="579.5" y1="357" x2="579.5" y2="418.14285714285717" stroke="#0000ff" stroke-width="1" />
<line x1="580.5" y1="417.14285714285717" x2="580.5" y2="467.14285714285717" stroke="#0000ff" stroke-width="1" />
<line x1="707.0" y1="245" x2="707.0" y2="354" stroke="#0000ff" stroke-width="2" />
<line x1="707.5" y1="353" x2="707.5" y2="418.14285714285717" stroke="#0000ff" stroke-width="1" />
<line x1="708.5" y1="417.14285714285717" x2="708.5" y2="467.14285714285717" stroke="#0000ff" stroke-width="1" />
<line x1="56" y1="250.5" x2="495" y2="250.5" stroke="#ffffff" stroke-width="1" />
<line x1="494" y1="249.5" x2="932" y2="249.5" stroke="#ffffff" stroke-width="1" />
<text x="61" y="161.0" text-anchor="end" style="font-family:'Liberation Sans', sans-serif;font-weight:bold;font-size:13px;fill:#c0c0c0">1V</text>
<text x="61" y="213.9" text-anchor="end" style="font-family:'Liberation Sans', sans-serif;font-weight:bold;font-size:13px;fill:#c0c0c0">0.1V</text>
<text x="61" y="266.7" text-anchor="end" style="font-family:'Liberation Sans', sans-serif;font-weight:bold;font-size:13px;fill:#c0c0c0">0.01V</text>
<text x="61" y="319.6" text-anchor="end" style="font-family:'Liberation Sans', sans-serif;font-weight:bold;font-size:13px;fill:#c0c0c0">0.001V</text>
<text x="61" y="372.4" text-anchor="end" style="font-family:'Liberation Sans', sans-serif;font-weight:bold;font-size:13px;fill:#c0c0c0">0.0001V</text>
<text x="61" y="425.3" text-anchor="end" style="font-family:'Liberation Sans', sans-serif;font-weight:bold;font-size:13px;fill:#c0c0c0">1e-005V</text>
<text x="61" y="478.1" text-anchor="end" style="font-family:'Liberation Sans', sans-serif;font-weight:bold;font-size:13px;fill:#c0c0c0">1e-006V</text>
<text x="61" y="531.0" text-anchor="end" style="font-family:'Liberation Sans', sans-serif;font-weight:bold;font-size:13px;fill:#c0c0c0">1e-007V</text>
<text x="948" y="161.0" text-anchor="end" style="font-family:'Liberation Sans', sans-serif;font-weight:bold;font-size:13px;fill:#c0c0c0">6A</text>
<text x="948" y="213.9" text-anchor="end" style="font-family:'Liberation Sans', sans-serif;font-weight:bold;font-size:13px;fill:#c0c0c0">5A</text>
<text x="948" y="266.7" text-anchor="end" style="font-family:'Liberation Sans', sans-serif;font-weight:bold;font-size:13px;fill:#c0c0c0">4A</text>
<text x="948" y="319.6" text-anchor="end" style="font-family:'Liberation Sans', sans-serif;font-weight:bold;font-size:13px;fill:#c0c0c0">3A</text>
<text x="948" y="372.4" text-anchor="end" style="font-family:'Liberation Sans', sans-serif;font-weight:bold;font-size:13px;fill:#c0c0c0">2A</text>
<text x="948" y="425.3" text-anchor="end" style="font-family:'Liberation Sans', sans-serif;font-weight:bold;font-size:13px;fill:#c0c0c0">1A</text>
<text x="948" y="478.1" text-anchor="end" style="font-family:'Liberation Sans', sans-serif;font-weight:bold;font-size:13px;fill:#c0c0c0">0A</text>
<text x="948" y="531.0" text-anchor="end" style="font-family:'Liberation Sans', sans-serif;font-weight:bold;font-size:13px;fill:#c0c0c0">-1A</text>
<text x="69.5" y="547" text-anchor="middle" style="font-family:'Liberation Sans', sans-serif;font-weight:bold;font-size:13px;fill:#c0c0c0">0.0ms</text>
<text x="154.4" y="547" text-anchor="middle" style="font-family:'Liberation Sans', sans-serif;font-weight:bold;font-size:13px;fill:#c0c0c0">0.1ms</text>
<text x="239.3" y="547" text-anchor="middle" style="font-family:'Liberation Sans', sans-serif;font-weight:bold;font-size:13px;fill:#c0c0c0">0.2ms</text>
<text x="324.2" y="547" text-anchor="middle" style="font-family:'Liberation Sans', sans-serif;font-weight:bold;font-size:13px;fill:#c0c0c0">0.3ms</text>
<text x="409.1" y="547" text-anchor="middle" style="font-family:'Liberation Sans', sans-serif;font-weight:bold;font-size:13px;fill:#c0c0c0">0.4ms</text>
<text x="494.0" y="547" text-anchor="middle" style="font-family:'Liberation Sans', sans-serif;font-weight:bold;font-size:13px;fill:#c0c0c0">0.5ms</text>
<text x="578.9" y="547" text-anchor="middle" style="font-family:'Liberation Sans', sans-serif;font-weight:bold;font-size:13px;fill:#c0c0c0">0.6ms</text>
<text x="663.8" y="547" text-anchor="middle" style="font-family:'Liberation Sans', sans-serif;font-weight:bold;font-size:13px;fill:#c0c0c0">0.7ms</text>
<text x="748.7" y="547" text-anchor="middle" style="font-family:'Liberation Sans', sans-serif;font-weight:bold;font-size:13px;fill:#c0c0c0">0.8ms</text>
<text x="833.6" y="547" text-anchor="middle" style="font-family:'Liberation Sans', sans-serif;font-weight:bold;font-size:13px;fill:#c0c0c0">0.9ms</text>
<text x="918.5" y="547" text-anchor="middle" style="font-family:'Liberation Sans', sans-serif;font-weight:bold;font-size:13px;fill:#c0c0c0">1.0ms</text>
<text x="281" y="151" text-anchor="middle" style="font-family:'Liberation Sans', sans-serif;font-weight:bold;font-size:13px;fill:#00ff00">V(a)</text>
<text x="704" y="151" text-anchor="middle" style="font-family:'Liberation Sans', sans-serif;font-weight:bold;font-size:13px;fill:#0000ff">I(L1)</text></svg></div>
</div>
<div class="win" style="left:960px;top:105px;width:958px;height:457px;background:#d7e4f2;border:1px solid #404040;border-radius:7px 7px 0 0;">
<div class="abs" style="left:0;top:0;right:0;height:32px;background:linear-gradient(#bccbdb 0%,#c6d4e4 45%,#dbe6f4 100%);border-radius:6px 6px 0 0;"></div>
<div class="abs" style="left:0;top:0;right:0;bottom:0;border-top:1px solid #f6f9fd;border-left:1px solid #eaf1f9;border-radius:6px 6px 0 0;"></div>
<div class="abs" style="left:9px;top:10px;width:18px;height:18px"><svg width="15" height="17" viewBox="0 0 16 18" style="position:absolute;left:1px;top:-1px"><path d="M1 9 H5 M12 1.5 L6.5 7 M6.5 11 L13 17.5" stroke="#0000ff" stroke-width="1.1" fill="none"/><rect x="4.5" y="4.5" width="2" height="9.5" fill="#0000ff"/><path d="M8 12 L12 13 L10.5 16 Z" fill="#0000ff"/></svg></div>
<div class="ttl" style="left:30px;top:11px;color:#9c9c9c">mur460_1A_400V_no diode_NQc</div>
<div class="cbtn" style="left:847px;background:linear-gradient(#c8d6e6 0%,#c0cfe1 48%,#b7c8dc 52%,#c9d8e9 100%);border-color:#8c9bb3">
<svg class="abs" style="left:0;top:0" width="30" height="16"><rect x="10" y="8.5" width="10.5" height="3" rx="1" fill="#f4f4f4" stroke="#555c66" stroke-width="1"/></svg>
</div>
<div class="cbtn" style="left:881px;background:linear-gradient(#c8d6e6 0%,#c0cfe1 48%,#b7c8dc 52%,#c9d8e9 100%);border-color:#8c9bb3">
<svg class="abs" style="left:0;top:0" width="30" height="16"><rect x="10" y="3.5" width="10" height="8" rx="1" fill="#f4f4f4" stroke="#555c66" stroke-width="1"/><rect x="13" y="6.5" width="4" height="2" fill="#b7c8dc" stroke="#555c66" stroke-width="1"/></svg>
</div>
<div class="cbtn" style="left:915px;background:linear-gradient(#c8d6e6 0%,#c0cfe1 48%,#b7c8dc 52%,#c9d8e9 100%);border-color:#8c9bb3">
<svg class="abs" style="left:0;top:0" width="30" height="16"><path d="M9.5 3.5 L13 3.5 L15 5.6 L17 3.5 L20.5 3.5 L16.9 7.5 L20.5 11.5 L17 11.5 L15 9.4 L13 11.5 L9.5 11.5 L13.1 7.5 Z" fill="#f4f4f4" stroke="#4c4f55" stroke-width="1" stroke-linejoin="round"/></svg>
</div>
<div class="abs" style="left:7px;top:30px;width:942px;height:418px;border-left:1px solid #a0a0a0;border-top:1px solid #a0a0a0;border-right:2px solid #fff;border-bottom:2px solid #fff;"></div>
<div class="abs" style="left:8px;top:31px;width:939px;height:415px;border-left:1px solid #696969;border-top:1px solid #696969;"></div>
<div class="abs" style="left:9px;top:32px;width:938px;height:414px;overflow:hidden;background:#c0c0c0"><svg class="abs" style="left:0;top:0;font-family:'DejaVu Sans Condensed', 'DejaVu Sans', 'Liberation Sans', sans-serif;font-weight:bold;font-size:12px;letter-spacing:0.2px" width="938" height="414" viewBox="970 138 938 414"><polyline points="1011.5,306.5 1011.5,310.5 1020.5,315.5 1003.5,323.5 1020.5,332.5 1003.5,341.5 1011.5,345.5 1011.5,349.5" fill="none" stroke="#00008c" stroke-width="1" stroke-linejoin="bevel" shape-rendering="crispEdges"/>
<path d="M1063.93,306.54 C1068.27,306.54 1072.07,308.17 1072.07,312.51 L1072.07,318.20 C1072.07,320.37 1070.98,321.46 1069.90,322.00 C1070.98,322.54 1072.07,323.63 1072.07,325.80 L1072.07,331.50 C1072.07,333.67 1070.98,334.75 1069.90,335.29 C1070.98,335.83 1072.07,336.92 1072.07,339.09 L1072.07,343.97 C1072.07,348.31 1068.27,349.94 1063.93,349.94" fill="none" stroke="#00008c" stroke-width="1" stroke-linejoin="bevel" shape-rendering="crispEdges"/>
<ellipse cx="1063.93" cy="322.00" rx="6.24" ry="2.01" fill="none" stroke="#00008c" stroke-width="1.25"/>
<ellipse cx="1063.93" cy="335.29" rx="6.24" ry="2.01" fill="none" stroke="#00008c" stroke-width="1.25"/>
<circle cx="1058.78" cy="343.16" r="2.17" fill="none" stroke="#00008c" stroke-width="1.25"/>
<polyline points="1202.5,306.5 1202.5,310.5 1211.5,315.5 1194.5,323.5 1211.5,332.5 1194.5,341.5 1202.5,345.5 1202.5,349.5" fill="none" stroke="#00008c" stroke-width="1" stroke-linejoin="bevel" shape-rendering="crispEdges"/>
<path d="M1254.89,306.54 C1259.23,306.54 1263.03,308.17 1263.03,312.51 L1263.03,318.20 C1263.03,320.37 1261.94,321.46 1260.86,322.00 C1261.94,322.54 1263.03,323.63 1263.03,325.80 L1263.03,331.50 C1263.03,333.67 1261.94,334.75 1260.86,335.29 C1261.94,335.83 1263.03,336.92 1263.03,339.09 L1263.03,343.97 C1263.03,348.31 1259.23,349.94 1254.89,349.94" fill="none" stroke="#00008c" stroke-width="1" stroke-linejoin="bevel" shape-rendering="crispEdges"/>
<ellipse cx="1254.89" cy="322.00" rx="6.24" ry="2.01" fill="none" stroke="#00008c" stroke-width="1.25"/>
<ellipse cx="1254.89" cy="335.29" rx="6.24" ry="2.01" fill="none" stroke="#00008c" stroke-width="1.25"/>
<circle cx="1249.74" cy="343.16" r="2.17" fill="none" stroke="#00008c" stroke-width="1.25"/>
<polyline points="1367.5,306.5 1367.5,310.5 1376.5,315.5 1359.5,323.5 1376.5,332.5 1359.5,341.5 1367.5,345.5 1367.5,349.5" fill="none" stroke="#00008c" stroke-width="1" stroke-linejoin="bevel" shape-rendering="crispEdges"/>
<path d="M1419.81,306.54 C1424.15,306.54 1427.95,308.17 1427.95,312.51 L1427.95,318.20 C1427.95,320.37 1426.86,321.46 1425.78,322.00 C1426.86,322.54 1427.95,323.63 1427.95,325.80 L1427.95,331.50 C1427.95,333.67 1426.86,334.75 1425.78,335.29 C1426.86,335.83 1427.95,336.92 1427.95,339.09 L1427.95,343.97 C1427.95,348.31 1424.15,349.94 1419.81,349.94" fill="none" stroke="#00008c" stroke-width="1" stroke-linejoin="bevel" shape-rendering="crispEdges"/>
<ellipse cx="1419.81" cy="322.00" rx="6.24" ry="2.01" fill="none" stroke="#00008c" stroke-width="1.25"/>
<ellipse cx="1419.81" cy="335.29" rx="6.24" ry="2.01" fill="none" stroke="#00008c" stroke-width="1.25"/>
<circle cx="1414.66" cy="343.16" r="2.17" fill="none" stroke="#00008c" stroke-width="1.25"/>
<polyline points="1550.5,297.5 1550.5,302.5 1558.5,306.5 1541.5,315.5 1558.5,323.5 1541.5,332.5 1550.5,336.5 1550.5,341.5" fill="none" stroke="#00008c" stroke-width="1" stroke-linejoin="bevel" shape-rendering="crispEdges"/>
<path d="M1584.73,297.86 C1589.07,297.86 1592.87,299.49 1592.87,303.83 L1592.87,309.52 C1592.87,311.69 1591.78,312.78 1590.70,313.32 C1591.78,313.86 1592.87,314.95 1592.87,317.12 L1592.87,322.81 C1592.87,324.99 1591.78,326.07 1590.70,326.61 C1591.78,327.15 1592.87,328.24 1592.87,330.41 L1592.87,335.29 C1592.87,339.63 1589.07,341.26 1584.73,341.26" fill="none" stroke="#00008c" stroke-width="1" stroke-linejoin="bevel" shape-rendering="crispEdges"/>
<ellipse cx="1584.73" cy="313.32" rx="6.24" ry="2.01" fill="none" stroke="#00008c" stroke-width="1.25"/>
<ellipse cx="1584.73" cy="326.61" rx="6.24" ry="2.01" fill="none" stroke="#00008c" stroke-width="1.25"/>
<circle cx="1579.58" cy="334.48" r="2.17" fill="none" stroke="#00008c" stroke-width="1.25"/>
<polyline points="1680.5,289.5 1680.5,293.5 1688.5,297.5 1671.5,306.5 1688.5,315.5 1671.5,323.5 1680.5,328.5 1680.5,332.5" fill="none" stroke="#00008c" stroke-width="1" stroke-linejoin="bevel" shape-rendering="crispEdges"/>
<path d="M1723.61,289.18 C1727.95,289.18 1731.75,290.81 1731.75,295.15 L1731.75,300.84 C1731.75,303.01 1730.66,304.10 1729.58,304.64 C1730.66,305.18 1731.75,306.27 1731.75,308.44 L1731.75,314.13 C1731.75,316.31 1730.66,317.39 1729.58,317.93 C1730.66,318.48 1731.75,319.56 1731.75,321.73 L1731.75,326.61 C1731.75,330.95 1727.95,332.58 1723.61,332.58" fill="none" stroke="#00008c" stroke-width="1" stroke-linejoin="bevel" shape-rendering="crispEdges"/>
<ellipse cx="1723.61" cy="304.64" rx="6.24" ry="2.01" fill="none" stroke="#00008c" stroke-width="1.25"/>
<ellipse cx="1723.61" cy="317.93" rx="6.24" ry="2.01" fill="none" stroke="#00008c" stroke-width="1.25"/>
<circle cx="1718.46" cy="325.80" r="2.17" fill="none" stroke="#00008c" stroke-width="1.25"/>
<polyline points="1723.5,341.5 1723.5,345.5 1732.5,349.5 1714.5,358.5 1732.5,367.5 1714.5,375.5 1723.5,380.5 1723.5,384.5" fill="none" stroke="#00008c" stroke-width="1" stroke-linejoin="bevel" shape-rendering="crispEdges"/>
<polyline points="1723.5,428.5 1723.5,436.5" fill="none" stroke="#00008c" stroke-width="1" stroke-linejoin="bevel" shape-rendering="crispEdges"/>
<polyline points="1706.5,428.5 1723.5,428.5" fill="none" stroke="#00008c" stroke-width="1" stroke-linejoin="bevel" shape-rendering="crispEdges"/>
<polyline points="1719.5,410.5 1723.5,410.5" fill="none" stroke="#00008c" stroke-width="1" stroke-linejoin="bevel" shape-rendering="crispEdges"/>
<polyline points="1706.5,410.5 1719.5,408.5 1719.5,412.5 1706.5,410.5" fill="none" stroke="#00008c" stroke-width="1" stroke-linejoin="bevel" shape-rendering="crispEdges"/>
<polyline points="1723.5,410.5 1723.5,428.5" fill="none" stroke="#00008c" stroke-width="1" stroke-linejoin="bevel" shape-rendering="crispEdges"/>
<polyline points="1706.5,393.5 1723.5,393.5" fill="none" stroke="#00008c" stroke-width="1" stroke-linejoin="bevel" shape-rendering="crispEdges"/>
<polyline points="1723.5,384.5 1723.5,393.5" fill="none" stroke="#00008c" stroke-width="1" stroke-linejoin="bevel" shape-rendering="crispEdges"/>
<polyline points="1706.5,389.5 1706.5,397.5" fill="none" stroke="#00008c" stroke-width="1" stroke-linejoin="bevel" shape-rendering="crispEdges"/>
<polyline points="1706.5,406.5 1706.5,415.5" fill="none" stroke="#00008c" stroke-width="1" stroke-linejoin="bevel" shape-rendering="crispEdges"/>
<polyline points="1706.5,423.5 1706.5,432.5" fill="none" stroke="#00008c" stroke-width="1" stroke-linejoin="bevel" shape-rendering="crispEdges"/>
<polyline points="1701.5,393.5 1701.5,428.5" fill="none" stroke="#00008c" stroke-width="1" stroke-linejoin="bevel" shape-rendering="crispEdges"/>
<polyline points="1697.5,428.5 1701.5,428.5" fill="none" stroke="#00008c" stroke-width="1" stroke-linejoin="bevel" shape-rendering="crispEdges"/>
<polyline points="1793.5,402.5 1793.5,412.5" fill="none" stroke="#00008c" stroke-width="1" stroke-linejoin="bevel" shape-rendering="crispEdges"/>
<polyline points="1784.5,412.5 1801.5,412.5" fill="none" stroke="#00008c" stroke-width="1" stroke-linejoin="bevel" shape-rendering="crispEdges"/>
<polyline points="1793.5,412.5 1784.5,425.5 1801.5,425.5 1793.5,412.5" fill="none" stroke="#00008c" stroke-width="1" stroke-linejoin="bevel" shape-rendering="crispEdges"/>
<polyline points="1793.5,425.5 1793.5,436.5" fill="none" stroke="#00008c" stroke-width="1" stroke-linejoin="bevel" shape-rendering="crispEdges"/>
<polyline points="1793.5,280.5 1793.5,289.5" fill="none" stroke="#00008c" stroke-width="1" stroke-linejoin="bevel" shape-rendering="crispEdges"/>
<polyline points="1784.5,289.5 1801.5,289.5 1793.5,297.5 1784.5,289.5" fill="none" stroke="#00008c" stroke-width="1" stroke-linejoin="bevel" shape-rendering="crispEdges"/>
<polyline points="1827.5,349.5 1827.5,360.5" fill="none" stroke="#00008c" stroke-width="1" stroke-linejoin="bevel" shape-rendering="crispEdges"/>
<polyline points="1810.5,360.5 1845.5,360.5" fill="none" stroke="#00008c" stroke-width="1" stroke-linejoin="bevel" shape-rendering="crispEdges"/>
<polyline points="1810.5,373.5 1845.5,373.5" fill="none" stroke="#00008c" stroke-width="1" stroke-linejoin="bevel" shape-rendering="crispEdges"/>
<polyline points="1819.5,365.5 1836.5,365.5 1836.5,369.5 1819.5,369.5 1819.5,365.5" fill="none" stroke="#00008c" stroke-width="1" stroke-linejoin="bevel" shape-rendering="crispEdges"/>
<polyline points="1819.5,378.5 1836.5,378.5 1836.5,382.5 1819.5,382.5 1819.5,378.5" fill="none" stroke="#00008c" stroke-width="1" stroke-linejoin="bevel" shape-rendering="crispEdges"/>
<polyline points="1827.5,382.5 1827.5,393.5" fill="none" stroke="#00008c" stroke-width="1" stroke-linejoin="bevel" shape-rendering="crispEdges"/>
<polyline points="1816.5,354.5 1821.5,354.5" fill="none" stroke="#00008c" stroke-width="1" stroke-linejoin="bevel" shape-rendering="crispEdges"/>
<polyline points="1819.5,351.5 1819.5,356.5" fill="none" stroke="#00008c" stroke-width="1" stroke-linejoin="bevel" shape-rendering="crispEdges"/>
<polyline points="1619.5,410.5 1619.5,415.5" fill="none" stroke="#00008c" stroke-width="1" stroke-linejoin="bevel" shape-rendering="crispEdges"/>
<polyline points="1619.5,449.5 1619.5,454.5" fill="none" stroke="#00008c" stroke-width="1" stroke-linejoin="bevel" shape-rendering="crispEdges"/>
<circle cx="1619.45" cy="432.40" r="17.36" fill="none" stroke="#00008c" stroke-width="1" stroke-linejoin="bevel" shape-rendering="crispEdges"/>
<polyline points="1617.5,419.5 1622.5,419.5" fill="none" stroke="#00008c" stroke-width="1" stroke-linejoin="bevel" shape-rendering="crispEdges"/>
<polyline points="1619.5,417.5 1619.5,422.5" fill="none" stroke="#00008c" stroke-width="1" stroke-linejoin="bevel" shape-rendering="crispEdges"/>
<polyline points="1617.5,445.5 1622.5,445.5" fill="none" stroke="#00008c" stroke-width="1" stroke-linejoin="bevel" shape-rendering="crispEdges"/>
<path d="M1606.43,433.49 C1606.43,423.72 1617.28,422.63 1619.45,432.40 C1621.62,442.16 1632.47,441.08 1633.01,432.40" fill="none" stroke="#00008c" stroke-width="1" stroke-linejoin="bevel" shape-rendering="crispEdges"/>
<polyline points="1619.5,402.5 1623.5,402.5 1628.5,393.5 1636.5,410.5 1645.5,393.5 1654.5,410.5 1658.5,402.5 1662.5,402.5" fill="none" stroke="#00008c" stroke-width="1" stroke-linejoin="bevel" shape-rendering="crispEdges"/>
<polyline points="1011.5,306.5 1011.5,280.5 1827.5,280.5 1827.5,349.5" fill="none" stroke="#0000ff" stroke-width="1" shape-rendering="crispEdges"/>
<polyline points="1063.5,280.5 1063.5,306.5" fill="none" stroke="#0000ff" stroke-width="1" shape-rendering="crispEdges"/>
<polyline points="1011.5,349.5 1063.5,349.5" fill="none" stroke="#0000ff" stroke-width="1" shape-rendering="crispEdges"/>
<polyline points="1202.5,280.5 1202.5,306.5" fill="none" stroke="#0000ff" stroke-width="1" shape-rendering="crispEdges"/>
<polyline points="1254.5,280.5 1254.5,306.5" fill="none" stroke="#0000ff" stroke-width="1" shape-rendering="crispEdges"/>
<polyline points="1202.5,349.5 1254.5,349.5" fill="none" stroke="#0000ff" stroke-width="1" shape-rendering="crispEdges"/>
<polyline points="1367.5,280.5 1367.5,306.5" fill="none" stroke="#0000ff" stroke-width="1" shape-rendering="crispEdges"/>
<polyline points="1419.5,280.5 1419.5,306.5" fill="none" stroke="#0000ff" stroke-width="1" shape-rendering="crispEdges"/>
<polyline points="1367.5,349.5 1419.5,349.5" fill="none" stroke="#0000ff" stroke-width="1" shape-rendering="crispEdges"/>
<polyline points="1550.5,280.5 1550.5,297.5" fill="none" stroke="#0000ff" stroke-width="1" shape-rendering="crispEdges"/>
<polyline points="1584.5,280.5 1584.5,297.5" fill="none" stroke="#0000ff" stroke-width="1" shape-rendering="crispEdges"/>
<polyline points="1550.5,341.5 1550.5,349.5 1628.5,349.5" fill="none" stroke="#0000ff" stroke-width="1" shape-rendering="crispEdges"/>
<polyline points="1584.5,341.5 1584.5,349.5" fill="none" stroke="#0000ff" stroke-width="1" shape-rendering="crispEdges"/>
<polyline points="1680.5,280.5 1680.5,289.5" fill="none" stroke="#0000ff" stroke-width="1" shape-rendering="crispEdges"/>
<polyline points="1723.5,280.5 1723.5,289.5" fill="none" stroke="#0000ff" stroke-width="1" shape-rendering="crispEdges"/>
<polyline points="1680.5,332.5 1680.5,341.5 1749.5,341.5" fill="none" stroke="#0000ff" stroke-width="1" shape-rendering="crispEdges"/>
<polyline points="1723.5,332.5 1723.5,341.5" fill="none" stroke="#0000ff" stroke-width="1" shape-rendering="crispEdges"/>
<polyline points="1723.5,384.5 1793.5,384.5 1793.5,402.5" fill="none" stroke="#0000ff" stroke-width="1" shape-rendering="crispEdges"/>
<polyline points="1793.5,436.5 1793.5,454.5" fill="none" stroke="#0000ff" stroke-width="1" shape-rendering="crispEdges"/>
<polyline points="1723.5,436.5 1723.5,454.5" fill="none" stroke="#0000ff" stroke-width="1" shape-rendering="crispEdges"/>
<polyline points="1619.5,454.5 1827.5,454.5 1827.5,393.5" fill="none" stroke="#0000ff" stroke-width="1" shape-rendering="crispEdges"/>
<polyline points="1619.5,410.5 1619.5,402.5" fill="none" stroke="#0000ff" stroke-width="1" shape-rendering="crispEdges"/>
<polyline points="1662.5,402.5 1680.5,402.5 1680.5,428.5 1697.5,428.5" fill="none" stroke="#0000ff" stroke-width="1" shape-rendering="crispEdges"/>
<rect x="1061" y="278" width="5" height="5" fill="#0000ff" shape-rendering="crispEdges"/>
<rect x="1200" y="278" width="5" height="5" fill="#0000ff" shape-rendering="crispEdges"/>
<rect x="1252" y="278" width="5" height="5" fill="#0000ff" shape-rendering="crispEdges"/>
<rect x="1365" y="278" width="5" height="5" fill="#0000ff" shape-rendering="crispEdges"/>
<rect x="1417" y="278" width="5" height="5" fill="#0000ff" shape-rendering="crispEdges"/>
<rect x="1548" y="278" width="5" height="5" fill="#0000ff" shape-rendering="crispEdges"/>
<rect x="1582" y="278" width="5" height="5" fill="#0000ff" shape-rendering="crispEdges"/>
<rect x="1582" y="347" width="5" height="5" fill="#0000ff" shape-rendering="crispEdges"/>
<rect x="1678" y="278" width="5" height="5" fill="#0000ff" shape-rendering="crispEdges"/>
<rect x="1721" y="278" width="5" height="5" fill="#0000ff" shape-rendering="crispEdges"/>
<rect x="1721" y="339" width="5" height="5" fill="#0000ff" shape-rendering="crispEdges"/>
<rect x="1721" y="382" width="5" height="5" fill="#0000ff" shape-rendering="crispEdges"/>
<rect x="1721" y="452" width="5" height="5" fill="#0000ff" shape-rendering="crispEdges"/>
<rect x="1791" y="452" width="5" height="5" fill="#0000ff" shape-rendering="crispEdges"/>
<rect x="1791" y="278" width="5" height="5" fill="#0000ff" shape-rendering="crispEdges"/>
<text x="1021.3" y="324.0" text-anchor="start" fill="#000">R5</text>
<text x="1021.3" y="344.0" text-anchor="start" fill="#000">.125</text>
<text x="1073.9" y="324.0" text-anchor="start" fill="#000">L3</text>
<text x="1073.9" y="345.7" text-anchor="start" fill="#000">1µ</text>
<text x="1212.3" y="324.0" text-anchor="start" fill="#000">R6</text>
<text x="1212.3" y="344.0" text-anchor="start" fill="#000">.028</text>
<text x="1264.9" y="324.0" text-anchor="start" fill="#000">L4</text>
<text x="1264.9" y="345.7" text-anchor="start" fill="#000">1µ</text>
<text x="1377.2" y="324.0" text-anchor="start" fill="#000">R7</text>
<text x="1377.2" y="344.0" text-anchor="start" fill="#000">.0067</text>
<text x="1429.8" y="324.0" text-anchor="start" fill="#000">L5</text>
<text x="1429.8" y="345.7" text-anchor="start" fill="#000">1µ</text>
<text x="1559.5" y="315.3" text-anchor="start" fill="#000">R3</text>
<text x="1559.5" y="334.5" text-anchor="start" fill="#000">.1</text>
<text x="1594.7" y="315.3" text-anchor="start" fill="#000">L2</text>
<text x="1594.7" y="337.0" text-anchor="start" fill="#000">1µ</text>
<text x="1626.7" y="354.1" text-anchor="start" fill="#000">b</text>
<text x="1689.7" y="306.6" text-anchor="start" fill="#000">R1</text>
<text x="1689.7" y="325.9" text-anchor="start" fill="#000">440</text>
<text x="1733.6" y="306.6" text-anchor="start" fill="#000">L1</text>
<text x="1733.6" y="328.3" text-anchor="start" fill="#000">300µRser=2 Cpar=70p</text>
<text x="1748.2" y="345.9" text-anchor="start" fill="#000">a</text>
<text x="1733.1" y="358.7" text-anchor="start" fill="#000">R2</text>
<text x="1733.1" y="377.9" text-anchor="start" fill="#000">6</text>
<text x="1639.8" y="390.1" text-anchor="middle" fill="#000">R4</text>
<text x="1639.8" y="422.1" text-anchor="middle" fill="#000">.1</text>
<text transform="translate(1196.0,215.4) scale(0.955,1)" text-anchor="start" fill="#0000c8">US quarter</text>
<text x="1196.0" y="236.6" text-anchor="start" fill="#000">K2 L1 L3 .01</text>
<text x="1196.0" y="251.8" text-anchor="start" fill="#000">K3 L1 L4 .01</text>
<text x="1196.0" y="268.4" text-anchor="start" fill="#000">K4 L1 L5 .03</text>
<text transform="translate(1535.0,249.6) scale(0.955,1)" text-anchor="start" fill="#0000c8">US nickel</text>
<text x="1531.2" y="272.4" text-anchor="start" fill="#0000c8">K1 L1 L2 .01</text>
<text x="1327.3" y="407.1" text-anchor="start" fill="#000">.step param T list 150u 300u 450u 600u 750u</text>
<text x="1576.3" y="433.0" text-anchor="start" fill="#000">V2</text>
<text x="1726.5" y="407.5" text-anchor="start" fill="#000">M1</text>
<text x="1658.2" y="440.3" text-anchor="start" fill="#000">SPA11N60C3</text>
<text x="1770.5" y="407.5" text-anchor="start" fill="#000">D2</text>
<text x="1778.6" y="441.1" text-anchor="start" fill="#000">RF071L4S</text>
<text x="1839.4" y="354.3" text-anchor="start" fill="#000">V1</text>
<text x="1839.9" y="402.1" text-anchor="start" fill="#000">6</text>
<text x="1528.5" y="474.0" text-anchor="start" fill="#000">PULSE(0 10 0 10n 10n {T} 1000u 1)</text>
<text x="1761.8" y="472.3" text-anchor="start" fill="#000">.tran 0 1000u 0</text></svg></div>
</div>
<div class="win" style="left:2px;top:562px;width:958px;height:457px;background:#b9d1ea;border:1px solid #000;border-radius:7px 7px 0 0;">
<div class="abs" style="left:0;top:0;right:0;height:32px;background:linear-gradient(#99b4d1 0%,#a6bfdc 50%,#b9d1ea 100%);border-radius:6px 6px 0 0;"></div>
<div class="abs" style="left:0;top:0;right:0;bottom:0;border:1px solid #fff;border-bottom-color:#35d6ee;border-right-color:#35d6ee;border-radius:6px 6px 0 0;"></div>
<div class="abs" style="left:9px;top:10px;width:18px;height:18px"><svg width="15" height="17" viewBox="0 0 16 18" style="position:absolute;left:1px;top:-1px"><path d="M1 9 H5 M12 1.5 L6.5 7 M6.5 11 L13 17.5" stroke="#0000ff" stroke-width="1.1" fill="none"/><rect x="4.5" y="4.5" width="2" height="9.5" fill="#0000ff"/><path d="M8 12 L12 13 L10.5 16 Z" fill="#0000ff"/></svg></div>
<div class="ttl" style="left:30px;top:11px;color:#000">mur460_1A_400V_no diode_NQb</div>
<div class="cbtn" style="left:847px;background:linear-gradient(#c3d6eb 0%,#b4cae4 48%,#a3bddb 52%,#b9cfe8 100%);border-color:#6b7f9c">
<svg class="abs" style="left:0;top:0" width="30" height="16"><rect x="10" y="8.5" width="10.5" height="3" rx="1" fill="#f4f4f4" stroke="#555c66" stroke-width="1"/></svg>
</div>
<div class="cbtn" style="left:881px;background:linear-gradient(#c3d6eb 0%,#b4cae4 48%,#a3bddb 52%,#b9cfe8 100%);border-color:#6b7f9c">
<svg class="abs" style="left:0;top:0" width="30" height="16"><rect x="10" y="3.5" width="10" height="8" rx="1" fill="#f4f4f4" stroke="#555c66" stroke-width="1"/><rect x="13" y="6.5" width="4" height="2" fill="#b7c8dc" stroke="#555c66" stroke-width="1"/></svg>
</div>
<div class="cbtn" style="left:915px;background:linear-gradient(#e9a99a 0%,#d97b68 45%,#c2402a 50%,#d3654f 100%);border-color:#5a1e1a">
<svg class="abs" style="left:0;top:0" width="30" height="16"><path d="M9.5 3.5 L13 3.5 L15 5.6 L17 3.5 L20.5 3.5 L16.9 7.5 L20.5 11.5 L17 11.5 L15 9.4 L13 11.5 L9.5 11.5 L13.1 7.5 Z" fill="#f4f4f4" stroke="#4c4f55" stroke-width="1" stroke-linejoin="round"/></svg>
</div>
<div class="abs" style="left:7px;top:30px;width:942px;height:418px;border-left:1px solid #a0a0a0;border-top:1px solid #a0a0a0;border-right:2px solid #fff;border-bottom:2px solid #fff;"></div>
<div class="abs" style="left:8px;top:31px;width:939px;height:415px;border-left:1px solid #696969;border-top:1px solid #696969;"></div>
<div class="abs" style="left:9px;top:32px;width:938px;height:414px;overflow:hidden;background:#c0c0c0"><svg class="abs" style="left:0;top:0;font-family:'DejaVu Sans Condensed', 'DejaVu Sans', 'Liberation Sans', sans-serif;font-weight:bold;font-size:12px;letter-spacing:0.2px" width="938" height="414" viewBox="12 595 938 414"><polyline points="26.5,766.5 26.5,771.5 36.5,775.5 17.5,784.5 36.5,793.5 17.5,803.5 26.5,807.5 26.5,812.5" fill="none" stroke="#00008c" stroke-width="1" stroke-linejoin="bevel" shape-rendering="crispEdges"/>
<path d="M81.93,766.44 C86.53,766.44 90.54,768.16 90.54,772.75 L90.54,778.78 C90.54,781.07 89.39,782.22 88.25,782.80 C89.39,783.37 90.54,784.52 90.54,786.81 L90.54,792.84 C90.54,795.13 89.39,796.28 88.25,796.85 C89.39,797.43 90.54,798.58 90.54,800.87 L90.54,806.03 C90.54,810.62 86.53,812.35 81.93,812.35" fill="none" stroke="#00008c" stroke-width="1" stroke-linejoin="bevel" shape-rendering="crispEdges"/>
<ellipse cx="81.93" cy="782.80" rx="6.60" ry="2.12" fill="none" stroke="#00008c" stroke-width="1.25"/>
<ellipse cx="81.93" cy="796.85" rx="6.60" ry="2.12" fill="none" stroke="#00008c" stroke-width="1.25"/>
<circle cx="76.48" cy="805.17" r="2.30" fill="none" stroke="#00008c" stroke-width="1.25"/>
<polyline points="228.5,766.5 228.5,771.5 238.5,775.5 219.5,784.5 238.5,793.5 219.5,803.5 228.5,807.5 228.5,812.5" fill="none" stroke="#00008c" stroke-width="1" stroke-linejoin="bevel" shape-rendering="crispEdges"/>
<path d="M283.91,766.44 C288.50,766.44 292.52,768.16 292.52,772.75 L292.52,778.78 C292.52,781.07 291.37,782.22 290.22,782.80 C291.37,783.37 292.52,784.52 292.52,786.81 L292.52,792.84 C292.52,795.13 291.37,796.28 290.22,796.85 C291.37,797.43 292.52,798.58 292.52,800.87 L292.52,806.03 C292.52,810.62 288.50,812.35 283.91,812.35" fill="none" stroke="#00008c" stroke-width="1" stroke-linejoin="bevel" shape-rendering="crispEdges"/>
<ellipse cx="283.91" cy="782.80" rx="6.60" ry="2.12" fill="none" stroke="#00008c" stroke-width="1.25"/>
<ellipse cx="283.91" cy="796.85" rx="6.60" ry="2.12" fill="none" stroke="#00008c" stroke-width="1.25"/>
<circle cx="278.46" cy="805.17" r="2.30" fill="none" stroke="#00008c" stroke-width="1.25"/>
<polyline points="403.5,766.5 403.5,771.5 412.5,775.5 394.5,784.5 412.5,793.5 394.5,803.5 403.5,807.5 403.5,812.5" fill="none" stroke="#00008c" stroke-width="1" stroke-linejoin="bevel" shape-rendering="crispEdges"/>
<path d="M458.35,766.44 C462.94,766.44 466.95,768.16 466.95,772.75 L466.95,778.78 C466.95,781.07 465.81,782.22 464.66,782.80 C465.81,783.37 466.95,784.52 466.95,786.81 L466.95,792.84 C466.95,795.13 465.81,796.28 464.66,796.85 C465.81,797.43 466.95,798.58 466.95,800.87 L466.95,806.03 C466.95,810.62 462.94,812.35 458.35,812.35" fill="none" stroke="#00008c" stroke-width="1" stroke-linejoin="bevel" shape-rendering="crispEdges"/>
<ellipse cx="458.35" cy="782.80" rx="6.60" ry="2.12" fill="none" stroke="#00008c" stroke-width="1.25"/>
<ellipse cx="458.35" cy="796.85" rx="6.60" ry="2.12" fill="none" stroke="#00008c" stroke-width="1.25"/>
<circle cx="452.90" cy="805.17" r="2.30" fill="none" stroke="#00008c" stroke-width="1.25"/>
<polyline points="596.5,757.5 596.5,761.5 605.5,766.5 586.5,775.5 605.5,784.5 586.5,793.5 596.5,798.5 596.5,803.5" fill="none" stroke="#00008c" stroke-width="1" stroke-linejoin="bevel" shape-rendering="crispEdges"/>
<path d="M632.78,757.26 C637.37,757.26 641.39,758.98 641.39,763.57 L641.39,769.60 C641.39,771.89 640.24,773.04 639.09,773.61 C640.24,774.19 641.39,775.34 641.39,777.63 L641.39,783.66 C641.39,785.95 640.24,787.10 639.09,787.67 C640.24,788.25 641.39,789.39 641.39,791.69 L641.39,796.85 C641.39,801.44 637.37,803.17 632.78,803.17" fill="none" stroke="#00008c" stroke-width="1" stroke-linejoin="bevel" shape-rendering="crispEdges"/>
<ellipse cx="632.78" cy="773.61" rx="6.60" ry="2.12" fill="none" stroke="#00008c" stroke-width="1.25"/>
<ellipse cx="632.78" cy="787.67" rx="6.60" ry="2.12" fill="none" stroke="#00008c" stroke-width="1.25"/>
<circle cx="627.33" cy="795.99" r="2.30" fill="none" stroke="#00008c" stroke-width="1.25"/>
<polyline points="733.5,748.5 733.5,752.5 742.5,757.5 724.5,766.5 742.5,775.5 724.5,784.5 733.5,789.5 733.5,793.5" fill="none" stroke="#00008c" stroke-width="1" stroke-linejoin="bevel" shape-rendering="crispEdges"/>
<path d="M779.68,748.08 C784.27,748.08 788.28,749.80 788.28,754.39 L788.28,760.42 C788.28,762.71 787.13,763.86 785.99,764.43 C787.13,765.01 788.28,766.16 788.28,768.45 L788.28,774.48 C788.28,776.77 787.13,777.92 785.99,778.49 C787.13,779.07 788.28,780.21 788.28,782.51 L788.28,787.67 C788.28,792.26 784.27,793.98 779.68,793.98" fill="none" stroke="#00008c" stroke-width="1" stroke-linejoin="bevel" shape-rendering="crispEdges"/>
<ellipse cx="779.68" cy="764.43" rx="6.60" ry="2.12" fill="none" stroke="#00008c" stroke-width="1.25"/>
<ellipse cx="779.68" cy="778.49" rx="6.60" ry="2.12" fill="none" stroke="#00008c" stroke-width="1.25"/>
<circle cx="774.22" cy="786.81" r="2.30" fill="none" stroke="#00008c" stroke-width="1.25"/>
<polyline points="779.5,894.5 779.5,904.5" fill="none" stroke="#00008c" stroke-width="1" stroke-linejoin="bevel" shape-rendering="crispEdges"/>
<polyline points="761.5,894.5 779.5,894.5" fill="none" stroke="#00008c" stroke-width="1" stroke-linejoin="bevel" shape-rendering="crispEdges"/>
<polyline points="775.5,876.5 779.5,876.5" fill="none" stroke="#00008c" stroke-width="1" stroke-linejoin="bevel" shape-rendering="crispEdges"/>
<polyline points="761.5,876.5 775.5,874.5 775.5,878.5 761.5,876.5" fill="none" stroke="#00008c" stroke-width="1" stroke-linejoin="bevel" shape-rendering="crispEdges"/>
<polyline points="779.5,876.5 779.5,894.5" fill="none" stroke="#00008c" stroke-width="1" stroke-linejoin="bevel" shape-rendering="crispEdges"/>
<polyline points="761.5,858.5 779.5,858.5" fill="none" stroke="#00008c" stroke-width="1" stroke-linejoin="bevel" shape-rendering="crispEdges"/>
<polyline points="779.5,849.5 779.5,858.5" fill="none" stroke="#00008c" stroke-width="1" stroke-linejoin="bevel" shape-rendering="crispEdges"/>
<polyline points="761.5,853.5 761.5,862.5" fill="none" stroke="#00008c" stroke-width="1" stroke-linejoin="bevel" shape-rendering="crispEdges"/>
<polyline points="761.5,872.5 761.5,881.5" fill="none" stroke="#00008c" stroke-width="1" stroke-linejoin="bevel" shape-rendering="crispEdges"/>
<polyline points="761.5,890.5 761.5,899.5" fill="none" stroke="#00008c" stroke-width="1" stroke-linejoin="bevel" shape-rendering="crispEdges"/>
<polyline points="756.5,858.5 756.5,894.5" fill="none" stroke="#00008c" stroke-width="1" stroke-linejoin="bevel" shape-rendering="crispEdges"/>
<polyline points="752.5,894.5 756.5,894.5" fill="none" stroke="#00008c" stroke-width="1" stroke-linejoin="bevel" shape-rendering="crispEdges"/>
<polyline points="853.5,867.5 853.5,878.5" fill="none" stroke="#00008c" stroke-width="1" stroke-linejoin="bevel" shape-rendering="crispEdges"/>
<polyline points="843.5,878.5 862.5,878.5" fill="none" stroke="#00008c" stroke-width="1" stroke-linejoin="bevel" shape-rendering="crispEdges"/>
<polyline points="853.5,878.5 843.5,892.5 862.5,892.5 853.5,878.5" fill="none" stroke="#00008c" stroke-width="1" stroke-linejoin="bevel" shape-rendering="crispEdges"/>
<polyline points="853.5,892.5 853.5,904.5" fill="none" stroke="#00008c" stroke-width="1" stroke-linejoin="bevel" shape-rendering="crispEdges"/>
<polyline points="853.5,738.5 853.5,748.5" fill="none" stroke="#00008c" stroke-width="1" stroke-linejoin="bevel" shape-rendering="crispEdges"/>
<polyline points="843.5,748.5 862.5,748.5 853.5,757.5 843.5,748.5" fill="none" stroke="#00008c" stroke-width="1" stroke-linejoin="bevel" shape-rendering="crispEdges"/>
<polyline points="889.5,812.5 889.5,823.5" fill="none" stroke="#00008c" stroke-width="1" stroke-linejoin="bevel" shape-rendering="crispEdges"/>
<polyline points="871.5,823.5 908.5,823.5" fill="none" stroke="#00008c" stroke-width="1" stroke-linejoin="bevel" shape-rendering="crispEdges"/>
<polyline points="871.5,837.5 908.5,837.5" fill="none" stroke="#00008c" stroke-width="1" stroke-linejoin="bevel" shape-rendering="crispEdges"/>
<polyline points="880.5,828.5 899.5,828.5 899.5,833.5 880.5,833.5 880.5,828.5" fill="none" stroke="#00008c" stroke-width="1" stroke-linejoin="bevel" shape-rendering="crispEdges"/>
<polyline points="880.5,842.5 899.5,842.5 899.5,846.5 880.5,846.5 880.5,842.5" fill="none" stroke="#00008c" stroke-width="1" stroke-linejoin="bevel" shape-rendering="crispEdges"/>
<polyline points="889.5,846.5 889.5,858.5" fill="none" stroke="#00008c" stroke-width="1" stroke-linejoin="bevel" shape-rendering="crispEdges"/>
<polyline points="877.5,816.5 883.5,816.5" fill="none" stroke="#00008c" stroke-width="1" stroke-linejoin="bevel" shape-rendering="crispEdges"/>
<polyline points="880.5,814.5 880.5,819.5" fill="none" stroke="#00008c" stroke-width="1" stroke-linejoin="bevel" shape-rendering="crispEdges"/>
<polyline points="669.5,876.5 669.5,881.5" fill="none" stroke="#00008c" stroke-width="1" stroke-linejoin="bevel" shape-rendering="crispEdges"/>
<polyline points="669.5,917.5 669.5,922.5" fill="none" stroke="#00008c" stroke-width="1" stroke-linejoin="bevel" shape-rendering="crispEdges"/>
<circle cx="669.51" cy="899.56" r="18.36" fill="none" stroke="#00008c" stroke-width="1" stroke-linejoin="bevel" shape-rendering="crispEdges"/>
<polyline points="667.5,885.5 672.5,885.5" fill="none" stroke="#00008c" stroke-width="1" stroke-linejoin="bevel" shape-rendering="crispEdges"/>
<polyline points="669.5,883.5 669.5,888.5" fill="none" stroke="#00008c" stroke-width="1" stroke-linejoin="bevel" shape-rendering="crispEdges"/>
<polyline points="667.5,913.5 672.5,913.5" fill="none" stroke="#00008c" stroke-width="1" stroke-linejoin="bevel" shape-rendering="crispEdges"/>
<path d="M655.73,900.71 C655.73,890.38 667.21,889.24 669.51,899.56 C671.80,909.89 683.28,908.74 683.85,899.56" fill="none" stroke="#00008c" stroke-width="1" stroke-linejoin="bevel" shape-rendering="crispEdges"/>
<polyline points="669.5,867.5 674.5,867.5 678.5,858.5 687.5,876.5 697.5,858.5 706.5,876.5 710.5,867.5 715.5,867.5" fill="none" stroke="#00008c" stroke-width="1" stroke-linejoin="bevel" shape-rendering="crispEdges"/>
<polyline points="26.5,766.5 26.5,738.5 889.5,738.5 889.5,812.5" fill="none" stroke="#0000ff" stroke-width="1" shape-rendering="crispEdges"/>
<polyline points="81.5,738.5 81.5,766.5" fill="none" stroke="#0000ff" stroke-width="1" shape-rendering="crispEdges"/>
<polyline points="26.5,812.5 81.5,812.5" fill="none" stroke="#0000ff" stroke-width="1" shape-rendering="crispEdges"/>
<polyline points="228.5,738.5 228.5,766.5" fill="none" stroke="#0000ff" stroke-width="1" shape-rendering="crispEdges"/>
<polyline points="283.5,738.5 283.5,766.5" fill="none" stroke="#0000ff" stroke-width="1" shape-rendering="crispEdges"/>
<polyline points="228.5,812.5 283.5,812.5" fill="none" stroke="#0000ff" stroke-width="1" shape-rendering="crispEdges"/>
<polyline points="403.5,738.5 403.5,766.5" fill="none" stroke="#0000ff" stroke-width="1" shape-rendering="crispEdges"/>
<polyline points="458.5,738.5 458.5,766.5" fill="none" stroke="#0000ff" stroke-width="1" shape-rendering="crispEdges"/>
<polyline points="403.5,812.5 458.5,812.5" fill="none" stroke="#0000ff" stroke-width="1" shape-rendering="crispEdges"/>
<polyline points="596.5,738.5 596.5,757.5" fill="none" stroke="#0000ff" stroke-width="1" shape-rendering="crispEdges"/>
<polyline points="632.5,738.5 632.5,757.5" fill="none" stroke="#0000ff" stroke-width="1" shape-rendering="crispEdges"/>
<polyline points="596.5,803.5 596.5,812.5 678.5,812.5" fill="none" stroke="#0000ff" stroke-width="1" shape-rendering="crispEdges"/>
<polyline points="632.5,803.5 632.5,812.5" fill="none" stroke="#0000ff" stroke-width="1" shape-rendering="crispEdges"/>
<polyline points="733.5,738.5 733.5,748.5" fill="none" stroke="#0000ff" stroke-width="1" shape-rendering="crispEdges"/>
<polyline points="779.5,738.5 779.5,748.5" fill="none" stroke="#0000ff" stroke-width="1" shape-rendering="crispEdges"/>
<polyline points="733.5,793.5 733.5,803.5 807.5,803.5" fill="none" stroke="#0000ff" stroke-width="1" shape-rendering="crispEdges"/>
<polyline points="779.5,793.5 779.5,803.5" fill="none" stroke="#0000ff" stroke-width="1" shape-rendering="crispEdges"/>
<polyline points="779.5,803.5 779.5,849.5" fill="none" stroke="#0000ff" stroke-width="1" shape-rendering="crispEdges"/>
<polyline points="779.5,849.5 853.5,849.5 853.5,867.5" fill="none" stroke="#0000ff" stroke-width="1" shape-rendering="crispEdges"/>
<polyline points="853.5,904.5 853.5,922.5" fill="none" stroke="#0000ff" stroke-width="1" shape-rendering="crispEdges"/>
<polyline points="779.5,904.5 779.5,922.5" fill="none" stroke="#0000ff" stroke-width="1" shape-rendering="crispEdges"/>
<polyline points="669.5,922.5 889.5,922.5 889.5,858.5" fill="none" stroke="#0000ff" stroke-width="1" shape-rendering="crispEdges"/>
<polyline points="669.5,876.5 669.5,867.5" fill="none" stroke="#0000ff" stroke-width="1" shape-rendering="crispEdges"/>
<polyline points="715.5,867.5 733.5,867.5 733.5,894.5 752.5,894.5" fill="none" stroke="#0000ff" stroke-width="1" shape-rendering="crispEdges"/>
<rect x="79" y="736" width="5" height="5" fill="#0000ff" shape-rendering="crispEdges"/>
<rect x="226" y="736" width="5" height="5" fill="#0000ff" shape-rendering="crispEdges"/>
<rect x="281" y="736" width="5" height="5" fill="#0000ff" shape-rendering="crispEdges"/>
<rect x="401" y="736" width="5" height="5" fill="#0000ff" shape-rendering="crispEdges"/>
<rect x="456" y="736" width="5" height="5" fill="#0000ff" shape-rendering="crispEdges"/>
<rect x="594" y="736" width="5" height="5" fill="#0000ff" shape-rendering="crispEdges"/>
<rect x="630" y="736" width="5" height="5" fill="#0000ff" shape-rendering="crispEdges"/>
<rect x="630" y="810" width="5" height="5" fill="#0000ff" shape-rendering="crispEdges"/>
<rect x="731" y="736" width="5" height="5" fill="#0000ff" shape-rendering="crispEdges"/>
<rect x="777" y="736" width="5" height="5" fill="#0000ff" shape-rendering="crispEdges"/>
<rect x="777" y="801" width="5" height="5" fill="#0000ff" shape-rendering="crispEdges"/>
<rect x="777" y="847" width="5" height="5" fill="#0000ff" shape-rendering="crispEdges"/>
<rect x="777" y="920" width="5" height="5" fill="#0000ff" shape-rendering="crispEdges"/>
<rect x="851" y="920" width="5" height="5" fill="#0000ff" shape-rendering="crispEdges"/>
<rect x="851" y="736" width="5" height="5" fill="#0000ff" shape-rendering="crispEdges"/>
<text transform="translate(37.8,784.6) scale(1.040,1)" text-anchor="start" fill="#000">R5</text>
<text transform="translate(37.8,805.0) scale(1.040,1)" text-anchor="start" fill="#000">.125</text>
<text transform="translate(93.5,784.6) scale(1.040,1)" text-anchor="start" fill="#000">L3</text>
<text transform="translate(93.5,807.6) scale(1.040,1)" text-anchor="start" fill="#000">1µ</text>
<text transform="translate(239.8,784.6) scale(1.040,1)" text-anchor="start" fill="#000">R6</text>
<text transform="translate(239.8,805.0) scale(1.040,1)" text-anchor="start" fill="#000">.028</text>
<text transform="translate(295.5,784.6) scale(1.040,1)" text-anchor="start" fill="#000">L4</text>
<text transform="translate(295.5,807.6) scale(1.040,1)" text-anchor="start" fill="#000">1µ</text>
<text transform="translate(414.2,784.6) scale(1.040,1)" text-anchor="start" fill="#000">R7</text>
<text transform="translate(414.2,805.0) scale(1.040,1)" text-anchor="start" fill="#000">.0067</text>
<text transform="translate(469.9,784.6) scale(1.040,1)" text-anchor="start" fill="#000">L5</text>
<text transform="translate(469.9,807.6) scale(1.040,1)" text-anchor="start" fill="#000">1µ</text>
<text transform="translate(607.0,775.4) scale(1.040,1)" text-anchor="start" fill="#000">R3</text>
<text transform="translate(607.0,795.8) scale(1.040,1)" text-anchor="start" fill="#000">.1</text>
<text transform="translate(644.3,775.4) scale(1.040,1)" text-anchor="start" fill="#000">L2</text>
<text transform="translate(644.3,798.4) scale(1.040,1)" text-anchor="start" fill="#000">1µ</text>
<text transform="translate(678.2,816.5) scale(1.040,1)" text-anchor="start" fill="#000">b</text>
<text transform="translate(744.7,766.3) scale(1.040,1)" text-anchor="start" fill="#000">R1</text>
<text transform="translate(744.7,786.6) scale(1.040,1)" text-anchor="start" fill="#000">440</text>
<text transform="translate(791.2,766.3) scale(1.040,1)" text-anchor="start" fill="#000">L1</text>
<text transform="translate(791.2,789.2) scale(1.066,1)" text-anchor="start" fill="#000">300µRser=1 Cpar=70p</text>
<text transform="translate(806.7,807.9) scale(1.040,1)" text-anchor="start" fill="#000">a</text>
<text transform="translate(692.0,854.8) scale(1.040,1)" text-anchor="middle" fill="#000">R4</text>
<text transform="translate(692.0,888.7) scale(1.040,1)" text-anchor="middle" fill="#000">.1</text>
<text transform="translate(223.6,669.7) scale(1.012,1)" text-anchor="start" fill="#0000c8">US quarter</text>
<text transform="translate(223.6,693.2) scale(1.010,1)" text-anchor="start" fill="#000">K2 L1 L3 .01</text>
<text transform="translate(223.6,709.3) scale(1.010,1)" text-anchor="start" fill="#000">K3 L1 L4 .01</text>
<text transform="translate(223.6,724.8) scale(1.010,1)" text-anchor="start" fill="#000">K4 L1 L5 .03</text>
<text transform="translate(581.7,707.0) scale(1.012,1)" text-anchor="start" fill="#0000c8">US nickel</text>
<text transform="translate(577.2,730.1) scale(1.010,1)" text-anchor="start" fill="#0000c8">K1 L1 L2 .01</text>
<text transform="translate(360.6,871.6) scale(1.020,1)" text-anchor="start" fill="#000">.step param T list 150u 300u 450u 600u 750u</text>
<text transform="translate(624.8,899.9) scale(1.040,1)" text-anchor="start" fill="#000">V2</text>
<text transform="translate(783.8,873.0) scale(1.040,1)" text-anchor="start" fill="#000">M1</text>
<text transform="translate(711.5,907.7) scale(1.010,1)" text-anchor="start" fill="#000">SPA11N60C3</text>
<text transform="translate(830.7,873.0) scale(1.040,1)" text-anchor="start" fill="#000">D2</text>
<text transform="translate(841.4,908.6) scale(1.010,1)" text-anchor="start" fill="#000">RF071L4S</text>
<text transform="translate(903.1,816.7) scale(1.040,1)" text-anchor="start" fill="#000">V1</text>
<text transform="translate(903.7,867.2) scale(1.040,1)" text-anchor="start" fill="#000">6</text>
<text transform="translate(574.3,943.3) scale(1.006,1)" text-anchor="start" fill="#000">PULSE(0 10 0 10n 10n {T} 1000u 1)</text>
<text transform="translate(821.1,940.5) scale(1.030,1)" text-anchor="start" fill="#000">.tran 0 1000u 0</text></svg></div>
</div>
<div class="win" style="left:960px;top:562px;width:958px;height:457px;background:#d7e4f2;border:1px solid #404040;border-radius:7px 7px 0 0;">
<div class="abs" style="left:0;top:0;right:0;height:32px;background:linear-gradient(#bccbdb 0%,#c6d4e4 45%,#dbe6f4 100%);border-radius:6px 6px 0 0;"></div>
<div class="abs" style="left:0;top:0;right:0;bottom:0;border-top:1px solid #f6f9fd;border-left:1px solid #eaf1f9;border-radius:6px 6px 0 0;"></div>
<div class="abs" style="left:9px;top:10px;width:18px;height:18px"><svg width="17" height="17" viewBox="0 0 17 17" shape-rendering="crispEdges"><rect x="0" y="0" width="16" height="14" fill="#c0c0c0"/><polyline points="0,4.5 3.5,1.5 7.5,4.5 11.5,1.5 16,4.5" stroke="#0000ff" stroke-width="1.2" fill="none" shape-rendering="auto"/><path d="M2 7.5h3 M7 7.5h1 M11 8.5h2 M0 9.5h1" stroke="#ff0000" stroke-width="1" fill="none"/><path d="M5 11.5h1 M11 11.5h1" stroke="#0000c0" stroke-width="1" fill="none"/><path d="M0 14.5 H16 M0 15.5h3 M5 15.5h2 M9 15.5h2 M13 15.5h3" stroke="#000" stroke-width="1" fill="none"/></svg></div>
<div class="ttl" style="left:30px;top:11px;color:#9c9c9c">mur460_1A_400V_no diode_NQc</div>
<div class="cbtn" style="left:847px;background:linear-gradient(#c8d6e6 0%,#c0cfe1 48%,#b7c8dc 52%,#c9d8e9 100%);border-color:#8c9bb3">
<svg class="abs" style="left:0;top:0" width="30" height="16"><rect x="10" y="8.5" width="10.5" height="3" rx="1" fill="#f4f4f4" stroke="#555c66" stroke-width="1"/></svg>
</div>
<div class="cbtn" style="left:881px;background:linear-gradient(#c8d6e6 0%,#c0cfe1 48%,#b7c8dc 52%,#c9d8e9 100%);border-color:#8c9bb3">
<svg class="abs" style="left:0;top:0" width="30" height="16"><rect x="10" y="3.5" width="10" height="8" rx="1" fill="#f4f4f4" stroke="#555c66" stroke-width="1"/><rect x="13" y="6.5" width="4" height="2" fill="#b7c8dc" stroke="#555c66" stroke-width="1"/></svg>
</div>
<div class="cbtn" style="left:915px;background:linear-gradient(#c8d6e6 0%,#c0cfe1 48%,#b7c8dc 52%,#c9d8e9 100%);border-color:#8c9bb3">
<svg class="abs" style="left:0;top:0" width="30" height="16"><path d="M9.5 3.5 L13 3.5 L15 5.6 L17 3.5 L20.5 3.5 L16.9 7.5 L20.5 11.5 L17 11.5 L15 9.4 L13 11.5 L9.5 11.5 L13.1 7.5 Z" fill="#f4f4f4" stroke="#4c4f55" stroke-width="1" stroke-linejoin="round"/></svg>
</div>
<div class="abs" style="left:7px;top:30px;width:942px;height:418px;border-left:1px solid #a0a0a0;border-top:1px solid #a0a0a0;border-right:2px solid #fff;border-bottom:2px solid #fff;"></div>
<div class="abs" style="left:8px;top:31px;width:939px;height:415px;border-left:1px solid #696969;border-top:1px solid #696969;"></div>
<div class="abs" style="left:9px;top:32px;width:938px;height:414px;overflow:hidden;background:#000"><svg class="abs" style="left:0;top:0" width="938" height="414" viewBox="970 595 938 414" shape-rendering="crispEdges"><line x1="1111.5" y1="615" x2="1111.5" y2="983" stroke="#8a8a8a" stroke-width="1" stroke-dasharray="3 3"/>
<line x1="1195.5" y1="615" x2="1195.5" y2="983" stroke="#8a8a8a" stroke-width="1" stroke-dasharray="3 3"/>
<line x1="1278.5" y1="615" x2="1278.5" y2="983" stroke="#8a8a8a" stroke-width="1" stroke-dasharray="3 3"/>
<line x1="1362.5" y1="615" x2="1362.5" y2="983" stroke="#8a8a8a" stroke-width="1" stroke-dasharray="3 3"/>
<line x1="1446.5" y1="615" x2="1446.5" y2="983" stroke="#8a8a8a" stroke-width="1" stroke-dasharray="3 3"/>
<line x1="1530.5" y1="615" x2="1530.5" y2="983" stroke="#8a8a8a" stroke-width="1" stroke-dasharray="3 3"/>
<line x1="1614.5" y1="615" x2="1614.5" y2="983" stroke="#8a8a8a" stroke-width="1" stroke-dasharray="3 3"/>
<line x1="1697.5" y1="615" x2="1697.5" y2="983" stroke="#8a8a8a" stroke-width="1" stroke-dasharray="3 3"/>
<line x1="1781.5" y1="615" x2="1781.5" y2="983" stroke="#8a8a8a" stroke-width="1" stroke-dasharray="3 3"/>
<line x1="1028" y1="666.5" x2="1865" y2="666.5" stroke="#8a8a8a" stroke-width="1" stroke-dasharray="3 3"/>
<line x1="1028" y1="719.5" x2="1865" y2="719.5" stroke="#8a8a8a" stroke-width="1" stroke-dasharray="3 3"/>
<line x1="1028" y1="772.5" x2="1865" y2="772.5" stroke="#8a8a8a" stroke-width="1" stroke-dasharray="3 3"/>
<line x1="1028" y1="824.5" x2="1865" y2="824.5" stroke="#8a8a8a" stroke-width="1" stroke-dasharray="3 3"/>
<line x1="1028" y1="877.5" x2="1865" y2="877.5" stroke="#8a8a8a" stroke-width="1" stroke-dasharray="3 3"/>
<line x1="1028" y1="930.5" x2="1865" y2="930.5" stroke="#8a8a8a" stroke-width="1" stroke-dasharray="3 3"/>
<line x1="1020" y1="613.5" x2="1872" y2="613.5" stroke="#c0c0c0" stroke-width="1" />
<line x1="1020" y1="983.5" x2="1872" y2="983.5" stroke="#c0c0c0" stroke-width="1" />
<line x1="1027.5" y1="613" x2="1027.5" y2="990" stroke="#c0c0c0" stroke-width="1" />
<line x1="1865.5" y1="613" x2="1865.5" y2="990" stroke="#c0c0c0" stroke-width="1" />
<line x1="1111.5" y1="980" x2="1111.5" y2="990" stroke="#c0c0c0" stroke-width="1" />
<line x1="1195.5" y1="980" x2="1195.5" y2="990" stroke="#c0c0c0" stroke-width="1" />
<line x1="1278.5" y1="980" x2="1278.5" y2="990" stroke="#c0c0c0" stroke-width="1" />
<line x1="1362.5" y1="980" x2="1362.5" y2="990" stroke="#c0c0c0" stroke-width="1" />
<line x1="1446.5" y1="980" x2="1446.5" y2="990" stroke="#c0c0c0" stroke-width="1" />
<line x1="1530.5" y1="980" x2="1530.5" y2="990" stroke="#c0c0c0" stroke-width="1" />
<line x1="1614.5" y1="980" x2="1614.5" y2="990" stroke="#c0c0c0" stroke-width="1" />
<line x1="1697.5" y1="980" x2="1697.5" y2="990" stroke="#c0c0c0" stroke-width="1" />
<line x1="1781.5" y1="980" x2="1781.5" y2="990" stroke="#c0c0c0" stroke-width="1" />
<line x1="1020" y1="613.5" x2="1027" y2="613.5" stroke="#c0c0c0" stroke-width="1" />
<line x1="1865" y1="613.5" x2="1872" y2="613.5" stroke="#c0c0c0" stroke-width="1" />
<line x1="1024" y1="650.5" x2="1027" y2="650.5" stroke="#c0c0c0" stroke-width="1" />
<line x1="1024" y1="641.5" x2="1027" y2="641.5" stroke="#c0c0c0" stroke-width="1" />
<line x1="1024" y1="634.5" x2="1027" y2="634.5" stroke="#c0c0c0" stroke-width="1" />
<line x1="1024" y1="629.5" x2="1027" y2="629.5" stroke="#c0c0c0" stroke-width="1" />
<line x1="1024" y1="625.5" x2="1027" y2="625.5" stroke="#c0c0c0" stroke-width="1" />
<line x1="1024" y1="621.5" x2="1027" y2="621.5" stroke="#c0c0c0" stroke-width="1" />
<line x1="1024" y1="618.5" x2="1027" y2="618.5" stroke="#c0c0c0" stroke-width="1" />
<line x1="1024" y1="615.5" x2="1027" y2="615.5" stroke="#c0c0c0" stroke-width="1" />
<line x1="1020" y1="666.5" x2="1027" y2="666.5" stroke="#c0c0c0" stroke-width="1" />
<line x1="1865" y1="666.5" x2="1872" y2="666.5" stroke="#c0c0c0" stroke-width="1" />
<line x1="1024" y1="703.5" x2="1027" y2="703.5" stroke="#c0c0c0" stroke-width="1" />
<line x1="1024" y1="693.5" x2="1027" y2="693.5" stroke="#c0c0c0" stroke-width="1" />
<line x1="1024" y1="687.5" x2="1027" y2="687.5" stroke="#c0c0c0" stroke-width="1" />
<line x1="1024" y1="682.5" x2="1027" y2="682.5" stroke="#c0c0c0" stroke-width="1" />
<line x1="1024" y1="678.5" x2="1027" y2="678.5" stroke="#c0c0c0" stroke-width="1" />
<line x1="1024" y1="674.5" x2="1027" y2="674.5" stroke="#c0c0c0" stroke-width="1" />
<line x1="1024" y1="671.5" x2="1027" y2="671.5" stroke="#c0c0c0" stroke-width="1" />
<line x1="1024" y1="668.5" x2="1027" y2="668.5" stroke="#c0c0c0" stroke-width="1" />
<line x1="1020" y1="719.5" x2="1027" y2="719.5" stroke="#c0c0c0" stroke-width="1" />
<line x1="1865" y1="719.5" x2="1872" y2="719.5" stroke="#c0c0c0" stroke-width="1" />
<line x1="1024" y1="756.5" x2="1027" y2="756.5" stroke="#c0c0c0" stroke-width="1" />
<line x1="1024" y1="746.5" x2="1027" y2="746.5" stroke="#c0c0c0" stroke-width="1" />
<line x1="1024" y1="740.5" x2="1027" y2="740.5" stroke="#c0c0c0" stroke-width="1" />
<line x1="1024" y1="735.5" x2="1027" y2="735.5" stroke="#c0c0c0" stroke-width="1" />
<line x1="1024" y1="730.5" x2="1027" y2="730.5" stroke="#c0c0c0" stroke-width="1" />
<line x1="1024" y1="727.5" x2="1027" y2="727.5" stroke="#c0c0c0" stroke-width="1" />
<line x1="1024" y1="724.5" x2="1027" y2="724.5" stroke="#c0c0c0" stroke-width="1" />
<line x1="1024" y1="721.5" x2="1027" y2="721.5" stroke="#c0c0c0" stroke-width="1" />
<line x1="1020" y1="772.5" x2="1027" y2="772.5" stroke="#c0c0c0" stroke-width="1" />
<line x1="1865" y1="772.5" x2="1872" y2="772.5" stroke="#c0c0c0" stroke-width="1" />
<line x1="1024" y1="809.5" x2="1027" y2="809.5" stroke="#c0c0c0" stroke-width="1" />
<line x1="1024" y1="799.5" x2="1027" y2="799.5" stroke="#c0c0c0" stroke-width="1" />
<line x1="1024" y1="793.5" x2="1027" y2="793.5" stroke="#c0c0c0" stroke-width="1" />
<line x1="1024" y1="787.5" x2="1027" y2="787.5" stroke="#c0c0c0" stroke-width="1" />
<line x1="1024" y1="783.5" x2="1027" y2="783.5" stroke="#c0c0c0" stroke-width="1" />
<line x1="1024" y1="780.5" x2="1027" y2="780.5" stroke="#c0c0c0" stroke-width="1" />
<line x1="1024" y1="777.5" x2="1027" y2="777.5" stroke="#c0c0c0" stroke-width="1" />
<line x1="1024" y1="774.5" x2="1027" y2="774.5" stroke="#c0c0c0" stroke-width="1" />
<line x1="1020" y1="824.5" x2="1027" y2="824.5" stroke="#c0c0c0" stroke-width="1" />
<line x1="1865" y1="824.5" x2="1872" y2="824.5" stroke="#c0c0c0" stroke-width="1" />
<line x1="1024" y1="861.5" x2="1027" y2="861.5" stroke="#c0c0c0" stroke-width="1" />
<line x1="1024" y1="852.5" x2="1027" y2="852.5" stroke="#c0c0c0" stroke-width="1" />
<line x1="1024" y1="845.5" x2="1027" y2="845.5" stroke="#c0c0c0" stroke-width="1" />
<line x1="1024" y1="840.5" x2="1027" y2="840.5" stroke="#c0c0c0" stroke-width="1" />
<line x1="1024" y1="836.5" x2="1027" y2="836.5" stroke="#c0c0c0" stroke-width="1" />
<line x1="1024" y1="833.5" x2="1027" y2="833.5" stroke="#c0c0c0" stroke-width="1" />
<line x1="1024" y1="830.5" x2="1027" y2="830.5" stroke="#c0c0c0" stroke-width="1" />
<line x1="1024" y1="827.5" x2="1027" y2="827.5" stroke="#c0c0c0" stroke-width="1" />
<line x1="1020" y1="877.5" x2="1027" y2="877.5" stroke="#c0c0c0" stroke-width="1" />
<line x1="1865" y1="877.5" x2="1872" y2="877.5" stroke="#c0c0c0" stroke-width="1" />
<line x1="1024" y1="914.5" x2="1027" y2="914.5" stroke="#c0c0c0" stroke-width="1" />
<line x1="1024" y1="905.5" x2="1027" y2="905.5" stroke="#c0c0c0" stroke-width="1" />
<line x1="1024" y1="898.5" x2="1027" y2="898.5" stroke="#c0c0c0" stroke-width="1" />
<line x1="1024" y1="893.5" x2="1027" y2="893.5" stroke="#c0c0c0" stroke-width="1" />
<line x1="1024" y1="889.5" x2="1027" y2="889.5" stroke="#c0c0c0" stroke-width="1" />
<line x1="1024" y1="885.5" x2="1027" y2="885.5" stroke="#c0c0c0" stroke-width="1" />
<line x1="1024" y1="882.5" x2="1027" y2="882.5" stroke="#c0c0c0" stroke-width="1" />
<line x1="1024" y1="880.5" x2="1027" y2="880.5" stroke="#c0c0c0" stroke-width="1" />
<line x1="1020" y1="930.5" x2="1027" y2="930.5" stroke="#c0c0c0" stroke-width="1" />
<line x1="1865" y1="930.5" x2="1872" y2="930.5" stroke="#c0c0c0" stroke-width="1" />
<line x1="1024" y1="967.5" x2="1027" y2="967.5" stroke="#c0c0c0" stroke-width="1" />
<line x1="1024" y1="958.5" x2="1027" y2="958.5" stroke="#c0c0c0" stroke-width="1" />
<line x1="1024" y1="951.5" x2="1027" y2="951.5" stroke="#c0c0c0" stroke-width="1" />
<line x1="1024" y1="946.5" x2="1027" y2="946.5" stroke="#c0c0c0" stroke-width="1" />
<line x1="1024" y1="942.5" x2="1027" y2="942.5" stroke="#c0c0c0" stroke-width="1" />
<line x1="1024" y1="938.5" x2="1027" y2="938.5" stroke="#c0c0c0" stroke-width="1" />
<line x1="1024" y1="935.5" x2="1027" y2="935.5" stroke="#c0c0c0" stroke-width="1" />
<line x1="1024" y1="933.5" x2="1027" y2="933.5" stroke="#c0c0c0" stroke-width="1" />
<line x1="1020" y1="983.5" x2="1027" y2="983.5" stroke="#c0c0c0" stroke-width="1" />
<line x1="1865" y1="983.5" x2="1872" y2="983.5" stroke="#c0c0c0" stroke-width="1" />
<line x1="1027.5" y1="613" x2="1027.5" y2="983" stroke="#00ff00" stroke-width="1" />
<line x1="1153.5" y1="613" x2="1153.5" y2="983" stroke="#00ff00" stroke-width="1" />
<polyline points="1156.2,613.0 1156.8,700.0 1157.4,748.0 1157.5,748.2 1157.5,748.5 1157.6,748.9 1157.7,749.3 1157.8,749.7 1157.9,750.2 1158.0,750.6 1158.2,751.0 1158.4,751.4 1158.6,751.7 1158.8,752.1 1159.0,752.4 1159.3,752.8 1159.5,753.1 1159.8,753.6 1160.1,754.0 1160.4,754.5 1160.8,755.0 1161.1,755.6 1161.5,756.1 1161.9,756.7 1162.3,757.3 1162.7,757.9 1163.2,758.5 1163.7,759.1 1164.1,759.6 1164.6,760.2 1165.1,760.8 1165.7,761.3 1166.3,762.0 1166.9,762.7 1167.6,763.5 1168.4,764.4 1169.2,765.4 1170.1,766.5 1171.0,767.7 1172.0,768.8 1173.0,770.0 1174.0,771.0 1175.1,772.0 1176.2,772.9 1177.4,773.7 1178.7,774.5 1179.9,775.3 1181.2,776.0 1182.5,776.7 1183.8,777.4 1185.1,778.0 1186.3,778.6 1187.5,779.1 1188.6,779.6 1189.8,780.1 1191.0,780.6 1192.2,781.0 1193.6,781.5 1195.1,782.0 1196.7,782.5 1198.3,783.1 1200.0,783.6 1201.8,784.1 1203.7,784.7 1205.7,785.3 1207.8,785.9 1210.1,786.5 1212.4,787.1 1214.7,787.8 1217.0,788.4 1219.5,789.1 1222.2,789.9 1225.2,790.6 1228.7,791.5 1232.6,792.5 1236.9,793.6 1241.4,794.7 1246.2,795.9 1251.3,797.1 1257.0,798.5 1263.2,799.9 1270.0,801.4 1277.6,803.0 1286.1,804.7 1295.7,806.6 1305.9,808.5 1316.7,810.6 1327.8,812.6 1338.9,814.7 1349.7,816.8 1360.2,818.8 1370.9,820.8 1382.3,823.0 1393.9,825.2 1405.4,827.4 1416.2,829.4 1425.9,831.3 1434.0,832.8 1440.2,834.0 1862.5,911.1" fill="none" stroke="#00ff00" stroke-width="1" stroke-linejoin="bevel" />
<polyline points="1862.5,911.1 1864.0,908.1 1864.5,901.1" fill="none" stroke="#00ff00" stroke-width="1" stroke-linejoin="bevel" />
<line x1="1278.5" y1="613" x2="1278.5" y2="983" stroke="#00ff00" stroke-width="1" />
<polyline points="1281.9,613.0 1282.5,700.0 1283.1,750.0 1283.1,750.3 1283.2,750.7 1283.2,751.2 1283.3,751.8 1283.4,752.4 1283.5,752.9 1283.7,753.5 1283.9,754.0 1284.2,754.5 1284.5,754.9 1284.9,755.3 1285.4,755.8 1285.8,756.2 1286.3,756.6 1286.8,757.0 1287.4,757.5 1288.0,758.0 1288.6,758.5 1289.3,759.0 1289.9,759.5 1290.6,760.0 1291.4,760.5 1292.1,761.0 1292.9,761.5 1293.7,762.0 1294.5,762.5 1295.3,763.0 1296.2,763.5 1297.1,764.0 1298.0,764.5 1298.9,765.0 1299.9,765.5 1300.9,766.0 1302.0,766.6 1303.0,767.2 1304.2,767.8 1305.3,768.3 1306.5,768.9 1307.7,769.5 1308.9,770.0 1310.1,770.5 1311.3,771.0 1312.5,771.5 1313.8,771.9 1315.1,772.4 1316.5,772.9 1318.1,773.4 1319.9,774.0 1321.9,774.6 1324.0,775.3 1326.2,776.0 1328.6,776.7 1331.1,777.4 1333.6,778.1 1336.2,778.8 1338.9,779.5 1341.5,780.1 1344.2,780.7 1346.8,781.3 1349.5,781.8 1352.4,782.4 1355.6,783.1 1359.1,783.7 1362.9,784.5 1366.9,785.3 1371.0,786.1 1375.3,787.0 1379.8,787.9 1384.8,788.8 1390.4,789.9 1396.7,791.1 1403.9,792.5 1411.8,794.0 1420.3,795.6 1429.4,797.3 1439.1,799.2 1449.5,801.1 1460.5,803.2 1472.3,805.4 1484.9,807.8 1499.4,810.4 1516.2,813.5 1534.4,816.9 1553.0,820.3 1570.9,823.6 1587.2,826.6 1600.9,829.2 1610.9,831.0 1862.5,876.9" fill="none" stroke="#00ff00" stroke-width="1" stroke-linejoin="bevel" />
<polyline points="1862.5,876.9 1864.0,873.9 1864.5,866.9" fill="none" stroke="#00ff00" stroke-width="1" stroke-linejoin="bevel" />
<line x1="1404.5" y1="613" x2="1404.5" y2="983" stroke="#00ff00" stroke-width="1" />
<polyline points="1407.6,613.0 1408.2,700.0 1408.8,747.5 1408.8,747.8 1408.9,748.2 1408.9,748.7 1409.0,749.3 1409.1,749.9 1409.2,750.4 1409.4,751.0 1409.6,751.5 1409.9,752.0 1410.2,752.4 1410.6,752.8 1411.1,753.2 1411.5,753.7 1412.0,754.1 1412.5,754.5 1413.1,755.0 1413.7,755.5 1414.3,756.0 1415.0,756.5 1415.6,757.0 1416.3,757.5 1417.1,758.0 1417.8,758.5 1418.6,759.0 1419.4,759.5 1420.2,760.0 1421.0,760.5 1421.9,761.0 1422.8,761.5 1423.7,762.0 1424.6,762.5 1425.6,763.0 1426.6,763.5 1427.7,764.1 1428.7,764.7 1429.8,765.2 1431.0,765.8 1432.2,766.4 1433.4,767.0 1434.6,767.5 1435.8,768.0 1437.0,768.5 1438.2,769.0 1439.5,769.4 1440.8,769.9 1442.2,770.4 1443.8,770.9 1445.6,771.5 1447.6,772.1 1449.7,772.8 1451.9,773.5 1454.3,774.2 1456.8,774.9 1459.3,775.6 1461.9,776.3 1464.6,777.0 1467.2,777.6 1469.8,778.2 1472.5,778.8 1475.2,779.3 1478.1,779.9 1481.3,780.6 1484.8,781.2 1488.6,782.0 1492.6,782.8 1496.7,783.6 1501.0,784.5 1505.5,785.4 1510.5,786.3 1516.1,787.4 1522.4,788.6 1529.6,790.0 1537.5,791.5 1546.0,793.1 1555.1,794.8 1564.8,796.7 1575.2,798.6 1586.2,800.7 1598.0,802.9 1610.6,805.2 1625.1,807.9 1641.9,811.0 1660.1,814.4 1678.7,817.8 1696.6,821.1 1712.9,824.1 1726.6,826.7 1736.6,828.5 1862.5,851.5" fill="none" stroke="#00ff00" stroke-width="1" stroke-linejoin="bevel" />
<polyline points="1862.5,851.5 1864.0,848.5 1864.5,841.5" fill="none" stroke="#00ff00" stroke-width="1" stroke-linejoin="bevel" />
<line x1="1530.5" y1="613" x2="1530.5" y2="983" stroke="#00ff00" stroke-width="1" />
<polyline points="1533.3,613.0 1533.9,700.0 1534.5,746.0 1534.5,746.3 1534.6,746.7 1534.6,747.2 1534.7,747.8 1534.8,748.4 1534.9,748.9 1535.1,749.5 1535.3,750.0 1535.6,750.5 1535.9,750.9 1536.3,751.3 1536.8,751.8 1537.2,752.2 1537.7,752.6 1538.2,753.0 1538.8,753.5 1539.4,754.0 1540.0,754.5 1540.7,755.0 1541.3,755.5 1542.0,756.0 1542.8,756.5 1543.5,757.0 1544.3,757.5 1545.1,758.0 1545.9,758.5 1546.7,759.0 1547.6,759.5 1548.5,760.0 1549.4,760.5 1550.3,761.0 1551.3,761.5 1552.3,762.0 1553.4,762.6 1554.4,763.2 1555.5,763.8 1556.7,764.3 1557.9,764.9 1559.1,765.5 1560.3,766.0 1561.5,766.5 1562.7,767.0 1563.9,767.5 1565.2,767.9 1566.5,768.4 1567.9,768.9 1569.5,769.4 1571.3,770.0 1573.3,770.6 1575.4,771.3 1577.6,772.0 1580.0,772.7 1582.5,773.4 1585.0,774.1 1587.6,774.8 1590.3,775.5 1592.9,776.1 1595.5,776.7 1598.2,777.3 1600.9,777.8 1603.8,778.4 1607.0,779.1 1610.5,779.7 1614.3,780.5 1618.3,781.3 1622.4,782.1 1626.7,783.0 1631.2,783.9 1636.2,784.8 1641.8,785.9 1648.1,787.1 1655.3,788.5 1663.2,790.0 1671.7,791.6 1680.8,793.3 1690.5,795.2 1700.9,797.1 1711.9,799.2 1723.7,801.4 1736.3,803.8 1750.8,806.4 1767.6,809.5 1785.8,812.9 1804.4,816.3 1822.3,819.6 1838.6,822.6 1852.3,825.2 1862.3,827.0 1862.5,827.0" fill="none" stroke="#00ff00" stroke-width="1" stroke-linejoin="bevel" />
<polyline points="1862.5,827.0 1864.0,824.0 1864.5,817.0" fill="none" stroke="#00ff00" stroke-width="1" stroke-linejoin="bevel" />
<line x1="1656.5" y1="613" x2="1656.5" y2="983" stroke="#00ff00" stroke-width="1" />
<polyline points="1659.0,613.0 1659.6,700.0 1660.2,746.0 1660.2,746.3 1660.3,746.7 1660.3,747.2 1660.4,747.8 1660.5,748.4 1660.6,748.9 1660.8,749.5 1661.0,750.0 1661.3,750.5 1661.6,750.9 1662.0,751.3 1662.5,751.8 1662.9,752.2 1663.4,752.6 1663.9,753.0 1664.5,753.5 1665.1,754.0 1665.7,754.5 1666.4,755.0 1667.0,755.5 1667.7,756.0 1668.5,756.5 1669.2,757.0 1670.0,757.5 1670.8,758.0 1671.6,758.5 1672.4,759.0 1673.3,759.5 1674.2,760.0 1675.1,760.5 1676.0,761.0 1677.0,761.5 1678.0,762.0 1679.1,762.6 1680.1,763.2 1681.2,763.8 1682.4,764.3 1683.6,764.9 1684.8,765.5 1686.0,766.0 1687.2,766.5 1688.4,767.0 1689.6,767.5 1690.9,767.9 1692.2,768.4 1693.6,768.9 1695.2,769.4 1697.0,770.0 1699.0,770.6 1701.1,771.3 1703.3,772.0 1705.7,772.7 1708.2,773.4 1710.7,774.1 1713.3,774.8 1716.0,775.5 1718.6,776.1 1721.2,776.7 1723.9,777.3 1726.6,777.8 1729.5,778.4 1732.7,779.1 1736.2,779.7 1740.0,780.5 1744.0,781.3 1748.1,782.1 1752.4,783.0 1756.9,783.9 1761.9,784.8 1767.5,785.9 1773.8,787.1 1781.0,788.5 1789.8,790.2 1800.3,792.2 1812.0,794.4 1824.1,796.6 1835.8,798.8 1846.5,800.8 1855.5,802.5 1862.0,803.8 1862.5,803.8" fill="none" stroke="#00ff00" stroke-width="1" stroke-linejoin="bevel" />
<polyline points="1862.5,803.8 1864.0,800.8 1864.5,793.8" fill="none" stroke="#00ff00" stroke-width="1" stroke-linejoin="bevel" />
<line x1="1865" y1="795" x2="1865" y2="983" stroke="#00ff00" stroke-width="2" />
<line x1="1865.5" y1="855" x2="1865.5" y2="983" stroke="#00ff00" stroke-width="3" />
<line x1="1865.5" y1="775" x2="1865.5" y2="800" stroke="#00ff00" stroke-width="1" />
<polyline points="1027.5,930.1 1027.5,930.0 1027.7,929.7 1027.9,929.2 1028.2,928.6 1028.6,927.7 1029.1,926.6 1029.6,925.4 1030.3,924.0 1031.0,922.4 1031.9,920.8 1032.8,918.9 1033.8,917.0 1034.9,915.0 1036.1,912.8 1037.3,910.6 1038.7,908.4 1040.1,906.1 1041.6,903.7 1043.3,901.4 1045.0,899.0 1046.7,896.6 1048.6,894.3 1050.6,892.0 1052.6,889.7 1054.8,887.5 1057.0,885.3 1059.3,883.2 1061.7,881.2 1064.2,879.2 1066.8,877.3 1069.4,875.5 1072.2,873.8 1075.0,872.2 1078.0,870.7 1081.0,869.2 1084.1,867.9 1087.3,866.6 1090.5,865.5 1093.9,864.4 1097.3,863.4 1100.9,862.4 1104.5,861.6 1108.2,860.8 1112.0,860.1 1115.9,859.4 1119.9,858.8 1123.9,858.3 1128.1,857.8 1132.3,857.3 1136.6,856.9 1141.0,856.6 1145.5,856.3 1150.1,856.0 1154.8,855.8 1159.5,855.5 1164.4,855.4 1169.3,855.2 1174.3,855.0 1179.4,854.9 1184.6,854.8 1189.9,854.7 1195.3,854.6 1200.7,854.5 1206.3,854.5 1211.9,854.4 1217.6,854.4 1223.4,854.3 1229.3,854.3 1235.3,854.3 1241.4,854.3 1247.5,854.2 1253.8,854.2 1260.1,854.2 1266.5,854.2 1273.0,854.2 1279.6,854.2 1286.3,854.2 1293.0,854.2 1299.9,854.2 1306.8,854.2 1313.9,854.1 1321.0,854.1 1328.2,854.1 1335.5,854.1 1342.8,854.1 1350.3,854.1 1357.9,854.1 1365.5,854.1 1373.2,854.1 1381.0,854.1 1388.9,854.1 1396.9,854.1 1405.0,854.1 1413.2,854.1 1421.4,854.1 1429.7,854.1 1438.2,854.1 1446.7,854.1 1455.3,854.1 1464.0,854.1 1472.7,854.1 1481.6,854.1 1490.5,854.1 1499.6,854.1 1508.7,854.1 1517.9,854.1 1527.2,854.1 1536.6,854.1 1546.1,854.1 1555.6,854.1 1565.3,854.1 1575.0,854.1 1584.8,854.1 1594.7,854.1 1604.7,854.1 1614.8,854.1 1625.0,854.1 1635.2,854.1 1645.6,854.1 1656.0,854.1" fill="none" stroke="#0000ff" stroke-width="1" stroke-linejoin="bevel" />
<line x1="1027.5" y1="918" x2="1027.5" y2="930.1428571428571" stroke="#0000ff" stroke-width="1" />
<line x1="1153.5" y1="852.838966313677" x2="1153.5" y2="914" stroke="#0000ff" stroke-width="1" />
<line x1="1154.5" y1="914" x2="1154.5" y2="920.1428571428571" stroke="#0000ff" stroke-width="1" />
<line x1="1155.5" y1="919.1428571428571" x2="1155.5" y2="930.1428571428571" stroke="#0000ff" stroke-width="1" />
<line x1="1278.5" y1="851.1725174017299" x2="1278.5" y2="879" stroke="#0000ff" stroke-width="1" />
<line x1="1279.0" y1="865.1725174017299" x2="1279.0" y2="879" stroke="#0000ff" stroke-width="2" />
<line x1="1279.5" y1="879" x2="1279.5" y2="920.1428571428571" stroke="#0000ff" stroke-width="1" />
<line x1="1280.5" y1="919.1428571428571" x2="1280.5" y2="930.1428571428571" stroke="#0000ff" stroke-width="1" />
<line x1="1404.5" y1="851.1351431546327" x2="1404.5" y2="886" stroke="#0000ff" stroke-width="1" />
<line x1="1405.0" y1="865.1351431546327" x2="1405.0" y2="879.1351431546327" stroke="#0000ff" stroke-width="2" />
<line x1="1405.5" y1="886" x2="1405.5" y2="920.1428571428571" stroke="#0000ff" stroke-width="1" />
<line x1="1406.5" y1="919.1428571428571" x2="1406.5" y2="930.1428571428571" stroke="#0000ff" stroke-width="1" />
<line x1="1530.5" y1="851.1343049445106" x2="1530.5" y2="904" stroke="#0000ff" stroke-width="1" />
<line x1="1531.0" y1="865.1343049445106" x2="1531.0" y2="879.1343049445106" stroke="#0000ff" stroke-width="2" />
<line x1="1531.5" y1="904" x2="1531.5" y2="920.1428571428571" stroke="#0000ff" stroke-width="1" />
<line x1="1532.5" y1="919.1428571428571" x2="1532.5" y2="930.1428571428571" stroke="#0000ff" stroke-width="1" />
<line x1="1656.5" y1="851.1342861455712" x2="1656.5" y2="916" stroke="#0000ff" stroke-width="1" />
<line x1="1657.0" y1="865.1342861455712" x2="1657.0" y2="879.1342861455712" stroke="#0000ff" stroke-width="2" />
<line x1="1657.5" y1="916" x2="1657.5" y2="920.1428571428571" stroke="#0000ff" stroke-width="1" />
<line x1="1658.5" y1="919.1428571428571" x2="1658.5" y2="930.1428571428571" stroke="#0000ff" stroke-width="1" />
<line x1="1155.2" y1="930.6428571428571" x2="1865" y2="930.6428571428571" stroke="#0000ff" stroke-width="1" />
<line x1="1009" y1="746.5" x2="1873" y2="746.5" stroke="#ffffff" stroke-width="1" />
<text x="1019" y="618.0" text-anchor="end" style="font-family:'Liberation Sans', sans-serif;font-weight:bold;font-size:13px;fill:#c0c0c0">1V</text>
<text x="1019" y="670.9" text-anchor="end" style="font-family:'Liberation Sans', sans-serif;font-weight:bold;font-size:13px;fill:#c0c0c0">0.1V</text>
<text x="1019" y="723.7" text-anchor="end" style="font-family:'Liberation Sans', sans-serif;font-weight:bold;font-size:13px;fill:#c0c0c0">0.01V</text>
<text x="1019" y="776.6" text-anchor="end" style="font-family:'Liberation Sans', sans-serif;font-weight:bold;font-size:13px;fill:#c0c0c0">0.001V</text>
<text x="1019" y="829.4" text-anchor="end" style="font-family:'Liberation Sans', sans-serif;font-weight:bold;font-size:13px;fill:#c0c0c0">0.0001V</text>
<text x="1019" y="882.3" text-anchor="end" style="font-family:'Liberation Sans', sans-serif;font-weight:bold;font-size:13px;fill:#c0c0c0">1e-005V</text>
<text x="1019" y="935.1" text-anchor="end" style="font-family:'Liberation Sans', sans-serif;font-weight:bold;font-size:13px;fill:#c0c0c0">1e-006V</text>
<text x="1019" y="988.0" text-anchor="end" style="font-family:'Liberation Sans', sans-serif;font-weight:bold;font-size:13px;fill:#c0c0c0">1e-007V</text>
<text x="1906" y="618.0" text-anchor="end" style="font-family:'Liberation Sans', sans-serif;font-weight:bold;font-size:13px;fill:#c0c0c0">3.0A</text>
<text x="1906" y="670.9" text-anchor="end" style="font-family:'Liberation Sans', sans-serif;font-weight:bold;font-size:13px;fill:#c0c0c0">2.5A</text>
<text x="1906" y="723.7" text-anchor="end" style="font-family:'Liberation Sans', sans-serif;font-weight:bold;font-size:13px;fill:#c0c0c0">2.0A</text>
<text x="1906" y="776.6" text-anchor="end" style="font-family:'Liberation Sans', sans-serif;font-weight:bold;font-size:13px;fill:#c0c0c0">1.5A</text>
<text x="1906" y="829.4" text-anchor="end" style="font-family:'Liberation Sans', sans-serif;font-weight:bold;font-size:13px;fill:#c0c0c0">1.0A</text>
<text x="1906" y="882.3" text-anchor="end" style="font-family:'Liberation Sans', sans-serif;font-weight:bold;font-size:13px;fill:#c0c0c0">0.5A</text>
<text x="1906" y="935.1" text-anchor="end" style="font-family:'Liberation Sans', sans-serif;font-weight:bold;font-size:13px;fill:#c0c0c0">0.0A</text>
<text x="1906" y="988.0" text-anchor="end" style="font-family:'Liberation Sans', sans-serif;font-weight:bold;font-size:13px;fill:#c0c0c0">-0.5A</text>
<text x="1027.5" y="1004" text-anchor="middle" style="font-family:'Liberation Sans', sans-serif;font-weight:bold;font-size:13px;fill:#c0c0c0">0.0ms</text>
<text x="1111.3" y="1004" text-anchor="middle" style="font-family:'Liberation Sans', sans-serif;font-weight:bold;font-size:13px;fill:#c0c0c0">0.1ms</text>
<text x="1195.1" y="1004" text-anchor="middle" style="font-family:'Liberation Sans', sans-serif;font-weight:bold;font-size:13px;fill:#c0c0c0">0.2ms</text>
<text x="1278.9" y="1004" text-anchor="middle" style="font-family:'Liberation Sans', sans-serif;font-weight:bold;font-size:13px;fill:#c0c0c0">0.3ms</text>
<text x="1362.7" y="1004" text-anchor="middle" style="font-family:'Liberation Sans', sans-serif;font-weight:bold;font-size:13px;fill:#c0c0c0">0.4ms</text>
<text x="1446.5" y="1004" text-anchor="middle" style="font-family:'Liberation Sans', sans-serif;font-weight:bold;font-size:13px;fill:#c0c0c0">0.5ms</text>
<text x="1530.3" y="1004" text-anchor="middle" style="font-family:'Liberation Sans', sans-serif;font-weight:bold;font-size:13px;fill:#c0c0c0">0.6ms</text>
<text x="1614.1" y="1004" text-anchor="middle" style="font-family:'Liberation Sans', sans-serif;font-weight:bold;font-size:13px;fill:#c0c0c0">0.7ms</text>
<text x="1697.9" y="1004" text-anchor="middle" style="font-family:'Liberation Sans', sans-serif;font-weight:bold;font-size:13px;fill:#c0c0c0">0.8ms</text>
<text x="1781.7" y="1004" text-anchor="middle" style="font-family:'Liberation Sans', sans-serif;font-weight:bold;font-size:13px;fill:#c0c0c0">0.9ms</text>
<text x="1865.5" y="1004" text-anchor="middle" style="font-family:'Liberation Sans', sans-serif;font-weight:bold;font-size:13px;fill:#c0c0c0">1.0ms</text>
<text x="1236" y="608" text-anchor="middle" style="font-family:'Liberation Sans', sans-serif;font-weight:bold;font-size:13px;fill:#00ff00">V(a)</text>
<text x="1655" y="608" text-anchor="middle" style="font-family:'Liberation Sans', sans-serif;font-weight:bold;font-size:13px;fill:#0000ff">I(L1)</text></svg></div>
</div>
<div id="status" style="top:1021px;height:19px;border-top:1px solid #dcdcdc"></div>
</body></html>
